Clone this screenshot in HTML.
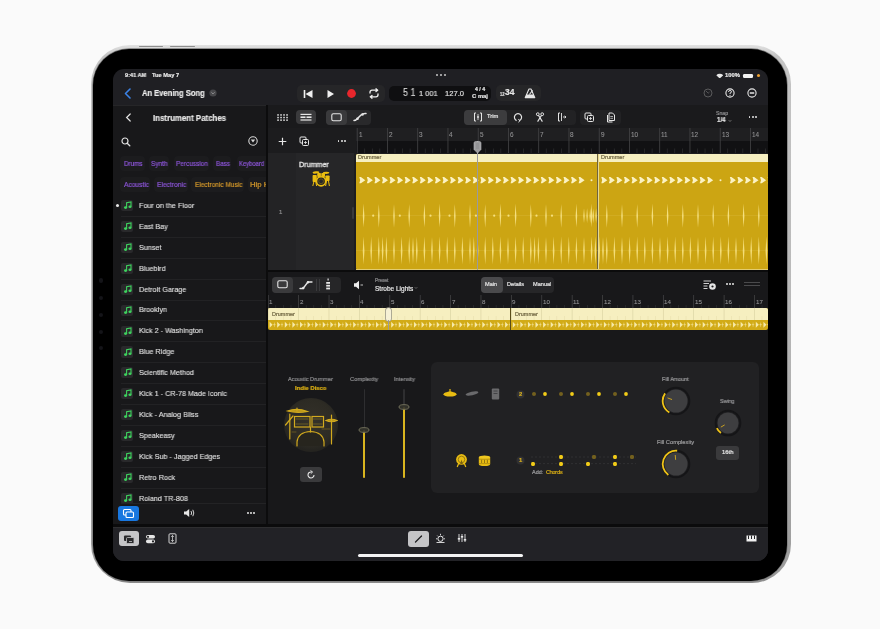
<!DOCTYPE html>
<html><head><meta charset="utf-8">
<style>
html,body{margin:0;padding:0}
body{width:880px;height:629px;background:#fafafa;position:relative;overflow:hidden;font-family:"Liberation Sans",sans-serif}
.a{position:absolute;display:block}
.t{position:absolute;white-space:nowrap;line-height:1;font-family:"Liberation Sans",sans-serif;will-change:transform}
</style></head><body>
<div class="a" style="left:90.5px;top:45px;width:700px;height:538px;border-radius:39px;background:linear-gradient(#e2e2e2,#c4c4c4 2%,#b8b8b8 50%,#9c9c9c 98%,#8a8a8a)"></div>
<div class="a" style="left:93.4px;top:49px;width:694px;height:531.5px;border-radius:36px;background:#000;box-shadow:0 0 0 0.7px #7a7a7a"></div>
<div class="a" style="left:139.3px;top:45.6px;width:24px;height:1.3px;background:#8e8e8e;border-radius:1px;"></div>
<div class="a" style="left:170px;top:45.6px;width:25px;height:1.3px;background:#8e8e8e;border-radius:1px;"></div>
<div class="a" style="left:98.5px;top:278.3px;width:4.4px;height:4.4px;background:#141418;border-radius:3px;"></div>
<div class="a" style="left:98.5px;top:295.5px;width:4.4px;height:4.4px;background:#141418;border-radius:3px;"></div>
<div class="a" style="left:98.5px;top:312.8px;width:4.4px;height:4.4px;background:#141418;border-radius:3px;"></div>
<div class="a" style="left:98.5px;top:329.8px;width:4.4px;height:4.4px;background:#141418;border-radius:3px;"></div>
<div class="a" style="left:98.5px;top:345.8px;width:4.4px;height:4.4px;background:#141418;border-radius:3px;"></div>
<div class="a" id="screen" style="left:113px;top:69px;width:655px;height:492px;border-radius:11px;overflow:hidden;background:#1f1f23"><div class="a" style="left:-113px;top:-69px;width:880px;height:629px">
<div class="a" style="left:113px;top:105px;width:153px;height:419px;background:#18181a;"></div>
<div class="a" style="left:113px;top:104.5px;width:153px;height:1px;background:#262628;"></div>
<div class="a" style="left:266px;top:105px;width:2px;height:421px;background:#0c0c0d;"></div>
<div class="a" style="left:268px;top:105px;width:500px;height:23px;background:#1a1a1c;"></div>
<div class="a" style="left:268px;top:128px;width:88px;height:25px;background:#1c1c1e;"></div>
<div class="a" style="left:356px;top:128px;width:412px;height:13px;background:#1f1f21;"></div>
<div class="a" style="left:356px;top:141px;width:412px;height:12px;background:#111113;"></div>
<div class="a" style="left:268px;top:153px;width:28px;height:117px;background:#232325;"></div>
<div class="a" style="left:296px;top:153px;width:58px;height:117px;background:#262628;"></div>
<div class="a" style="left:354px;top:153px;width:414px;height:117px;background:#1d1d1f;"></div>
<div class="a" style="left:268px;top:270px;width:500px;height:2px;background:#0b0b0c;"></div>
<div class="a" style="left:268px;top:272px;width:500px;height:252px;background:#18181a;"></div>
<div class="a" style="left:113px;top:524px;width:655px;height:2.5px;background:#0b0b0c;"></div>
<div class="a" style="left:113px;top:526.5px;width:655px;height:35px;background:#222226;"></div>
<div class="a" style="left:113px;top:526.5px;width:655px;height:1px;background:#2e2e30;"></div>
<div class="a" style="left:358px;top:553.5px;width:164.5px;height:3px;background:#f4f4f4;border-radius:2px;"></div>
<div class="t" style="left:125.4px;top:72.57px;font-size:5.7px;color:#e8e8e8;font-weight:bold;transform:scaleX(0.98);transform-origin:0 0;-webkit-text-stroke:0.2px #e8e8e8;">9:41 AM</div>
<div class="t" style="left:152px;top:72.57px;font-size:5.7px;color:#e8e8e8;font-weight:bold;-webkit-text-stroke:0.2px #e8e8e8;">Tue May 7</div>
<div class="a" style="left:435.5px;top:74.3px;width:2.2px;height:2.2px;background:#c8c8c8;border-radius:1.1px;"></div>
<div class="a" style="left:439.7px;top:74.3px;width:2.2px;height:2.2px;background:#c8c8c8;border-radius:1.1px;"></div>
<div class="a" style="left:443.9px;top:74.3px;width:2.2px;height:2.2px;background:#c8c8c8;border-radius:1.1px;"></div>
<svg class="a" style="left:715.5px;top:72.6px" width="7.5" height="5.5" viewBox="0 0 7.5 5.5"><path d="M0.3 2.2 A5 5 0 0 1 7.2 2.2 L3.75 5.5 Z" fill="#e8e8e8"/></svg>
<div class="t" style="left:725px;top:72.59px;font-size:5.8px;color:#e8e8e8;font-weight:bold;-webkit-text-stroke:0.2px #e8e8e8;">100%</div>
<div class="a" style="left:742.8px;top:74.3px;width:10.4px;height:3.6px;background:#f2f2f2;border-radius:1.2px;"></div>
<div class="a" style="left:756.6px;top:74.4px;width:3px;height:3px;background:#f0a030;border-radius:2px;"></div>
<svg class="a" style="left:123px;top:87.5px" width="9" height="11" viewBox="0 0 9 11"><path d="M7 1 L2.5 5.5 L7 10" stroke="#3b82e6" stroke-width="1.6" fill="none" stroke-linecap="round" stroke-linejoin="round"/></svg>
<div class="t" style="left:142.1px;top:89.22px;font-size:8.6px;color:#ececec;font-weight:bold;transform:scaleX(0.88);transform-origin:0 0;-webkit-text-stroke:0.2px #ececec;">An Evening Song</div>
<svg class="a" style="left:209px;top:89px" width="8" height="8" viewBox="0 0 8 8"><circle cx="4" cy="4" r="3.6" fill="#48484b"/><path d="M2.4 3.3 L4 4.9 L5.6 3.3" stroke="#9a9a9c" stroke-width="0.9" fill="none"/></svg>
<div class="a" style="left:297px;top:85px;width:88px;height:17px;background:#262628;border-radius:5px;"></div>
<svg class="a" style="left:302px;top:88.5px" width="12" height="10" viewBox="0 0 12 10"><rect x="1.7" y="1" width="1.6" height="8" fill="#f0f0f0"/><path d="M10.5 1 L3.5 5 L10.5 9 Z" fill="#f0f0f0"/></svg>
<svg class="a" style="left:325px;top:88.5px" width="10" height="10" viewBox="0 0 10 10"><path d="M2.5 1 L9 5 L2.5 9 Z" fill="#f0f0f0"/></svg>
<svg class="a" style="left:345.5px;top:88px" width="11" height="11" viewBox="0 0 11 11"><circle cx="5.5" cy="5.5" r="4.4" fill="#e8262c"/></svg>
<svg class="a" style="left:367.5px;top:88px" width="12" height="11" viewBox="0 0 12 11"><path d="M2 5 V4.2 A2 2 0 0 1 4 2.2 H9.5 M8 0.8 L9.7 2.2 L8 3.6 M10 6 V6.8 A2 2 0 0 1 8 8.8 H2.5 M4 7.4 L2.3 8.8 L4 10.2" stroke="#eeeeee" stroke-width="1.3" fill="none" stroke-linecap="round" stroke-linejoin="round"/></svg>
<div class="a" style="left:389px;top:85.5px;width:102px;height:15.5px;background:#0f0f11;border-radius:5px;"></div>
<div class="t" style="left:402.5px;top:88.2px;font-size:10.4px;color:#dcdcdc;transform:scaleX(0.86);transform-origin:0 0;-webkit-text-stroke:0.1px #dcdcdc;">5 1</div>
<div class="t" style="left:419px;top:90.47px;font-size:7.6px;color:#dcdcdc;transform:scaleX(0.98);transform-origin:0 0;-webkit-text-stroke:0.2px #dcdcdc;">1 001</div>
<div class="t" style="left:444.8px;top:90.47px;font-size:7.6px;color:#dcdcdc;-webkit-text-stroke:0.2px #dcdcdc;">127.0</div>
<div class="t" style="left:474.6px;top:88.14px;font-size:4.8px;color:#e0e0e0;font-weight:bold;transform:scaleX(1.07);transform-origin:0 0;-webkit-text-stroke:0.2px #e0e0e0;">4 / 4</div>
<div class="t" style="left:471.6px;top:94.43px;font-size:5.4px;color:#e0e0e0;font-weight:bold;transform:scaleX(1.09);transform-origin:0 0;-webkit-text-stroke:0.2px #e0e0e0;">C maj</div>
<div class="a" style="left:496px;top:85px;width:45px;height:16px;background:#262628;border-radius:5px;"></div>
<div class="t" style="left:500.2px;top:90.55px;font-size:6.2px;color:#e6e6e6;font-weight:bold;transform:scaleX(0.65);transform-origin:0 0;-webkit-text-stroke:0.2px #e6e6e6;">12</div>
<div class="t" style="left:504.8px;top:88.96px;font-size:8.2px;color:#e6e6e6;font-weight:bold;transform:scaleX(1.03);transform-origin:0 0;-webkit-text-stroke:0.2px #e6e6e6;">34</div>
<svg class="a" style="left:523.5px;top:88px" width="12" height="11" viewBox="0 0 12 11"><path d="M5 1 H7 L10.8 9.6 H1.2 Z" stroke="#e6e6e6" stroke-width="1.1" fill="none" stroke-linejoin="round"/><path d="M2.4 6.6 H9.6 L10.6 9.4 H1.4 Z" fill="#e6e6e6"/><path d="M5.4 6.5 L8.6 2.4" stroke="#e6e6e6" stroke-width="1.1"/></svg>
<svg class="a" style="left:703px;top:88px" width="10" height="10" viewBox="0 0 10 10"><circle cx="5" cy="5" r="4" stroke="#5a5a5c" stroke-width="1" fill="none"/><path d="M3 3 L5.2 5.2 L6.5 4" stroke="#5a5a5c" stroke-width="0.9" fill="none"/></svg>
<svg class="a" style="left:725px;top:88px" width="10" height="10" viewBox="0 0 10 10"><circle cx="5" cy="5" r="4.1" stroke="#e6e6e6" stroke-width="1.1" fill="none"/><path d="M3.5 3.9 Q3.5 2.5 5 2.5 Q6.5 2.5 6.5 3.8 Q6.5 4.7 5 5.2 V6" stroke="#e6e6e6" stroke-width="1" fill="none"/><circle cx="5" cy="7.3" r="0.6" fill="#e6e6e6"/></svg>
<svg class="a" style="left:746.6px;top:88px" width="10" height="10" viewBox="0 0 10 10"><circle cx="5" cy="5" r="4.1" stroke="#e6e6e6" stroke-width="1.1" fill="none"/><path d="M2.8 5 H7.2" stroke="#e6e6e6" stroke-width="1.4"/></svg>
<svg class="a" style="left:125px;top:112.5px" width="7" height="10" viewBox="0 0 7 10"><path d="M5.2 1 L1.6 4.5 L5.2 8" stroke="#dedede" stroke-width="1.2" fill="none" stroke-linecap="round"/></svg>
<div class="t" style="left:152.6px;top:114.19px;font-size:8.4px;color:#e6e6e6;font-weight:bold;transform:scaleX(0.94);transform-origin:0 0;-webkit-text-stroke:0.2px #e6e6e6;">Instrument Patches</div>
<svg class="a" style="left:121px;top:136.5px" width="10" height="10" viewBox="0 0 10 10"><circle cx="4" cy="4" r="3" stroke="#e0e0e0" stroke-width="1.2" fill="none"/><path d="M6.2 6.2 L8.8 8.8" stroke="#e0e0e0" stroke-width="1.3" stroke-linecap="round"/></svg>
<svg class="a" style="left:248px;top:136.3px" width="10" height="10" viewBox="0 0 10 10"><circle cx="5" cy="5" r="4.2" stroke="#d8d8d8" stroke-width="1.1" fill="none"/><path d="M2.8 3.6 H7.2 L5 6.6 Z" fill="#d8d8d8"/></svg>
<div class="a" style="left:113px;top:150px;width:153px;height:45px;overflow:hidden"><div class="a" style="left:-113px;top:-150px;width:880px;height:629px">
<div class="a" style="left:120.3px;top:156px;width:24.5px;height:15px;background:#1c1c1e;border-radius:4px;"></div>
<div class="t" style="left:123.5px;top:160.37px;font-size:7px;color:#8c55d8;transform:scaleX(0.9);transform-origin:0 0;-webkit-text-stroke:0.2px #8c55d8;">Drums</div>
<div class="a" style="left:148.5px;top:156px;width:20.9px;height:15px;background:#1c1c1e;border-radius:4px;"></div>
<div class="t" style="left:151px;top:160.37px;font-size:7px;color:#8c55d8;transform:scaleX(0.92);transform-origin:0 0;-webkit-text-stroke:0.2px #8c55d8;">Synth</div>
<div class="a" style="left:174px;top:156px;width:35.4px;height:15px;background:#1c1c1e;border-radius:4px;"></div>
<div class="t" style="left:176.3px;top:160.37px;font-size:7px;color:#8c55d8;transform:scaleX(0.92);transform-origin:0 0;-webkit-text-stroke:0.2px #8c55d8;">Percussion</div>
<div class="a" style="left:213px;top:156px;width:18px;height:15px;background:#1c1c1e;border-radius:4px;"></div>
<div class="t" style="left:215.7px;top:160.37px;font-size:7px;color:#8c55d8;transform:scaleX(0.9);transform-origin:0 0;-webkit-text-stroke:0.2px #8c55d8;">Bass</div>
<div class="a" style="left:236.6px;top:156px;width:38.4px;height:15px;background:#1c1c1e;border-radius:4px;"></div>
<div class="t" style="left:238.8px;top:160.37px;font-size:7px;color:#8c55d8;transform:scaleX(0.84);transform-origin:0 0;-webkit-text-stroke:0.2px #8c55d8;">Keyboard</div>
<div class="a" style="left:120.3px;top:176.5px;width:30px;height:15px;background:#1c1c1e;border-radius:4px;"></div>
<div class="t" style="left:123.5px;top:181.37px;font-size:7px;color:#8c55d8;transform:scaleX(0.94);transform-origin:0 0;-webkit-text-stroke:0.2px #8c55d8;">Acoustic</div>
<div class="a" style="left:154px;top:176.5px;width:33.5px;height:15px;background:#1c1c1e;border-radius:4px;"></div>
<div class="t" style="left:156.6px;top:181.37px;font-size:7px;color:#8c55d8;transform:scaleX(0.95);transform-origin:0 0;-webkit-text-stroke:0.2px #8c55d8;">Electronic</div>
<div class="a" style="left:191px;top:176.5px;width:53px;height:15px;background:#1c1c1e;border-radius:4px;"></div>
<div class="t" style="left:194.5px;top:181.37px;font-size:7px;color:#d4982a;transform:scaleX(0.93);transform-origin:0 0;-webkit-text-stroke:0.2px #d4982a;">Electronic Music</div>
<div class="a" style="left:247.5px;top:176.5px;width:42.5px;height:15px;background:#1c1c1e;border-radius:4px;"></div>
<div class="t" style="left:250px;top:181.37px;font-size:7px;color:#d4982a;transform:scaleX(1.11);transform-origin:0 0;-webkit-text-stroke:0.2px #d4982a;">Hip Hop</div>
</div></div>
<div class="a" style="left:121.2px;top:200.1px;width:12.3px;height:11.2px;background:#29292b;border-radius:2px;"></div>
<svg class="a" style="left:122.5px;top:201.2px" width="10" height="9" viewBox="0 0 10 9"><path d="M3.6 6.4 V1.8 L8 0.9 V5.5" stroke="#3ed25e" stroke-width="1.1" fill="none"/><ellipse cx="2.6" cy="6.6" rx="1.6" ry="1.3" fill="#3ed25e"/><ellipse cx="7" cy="5.8" rx="1.6" ry="1.3" fill="#3ed25e"/></svg>
<div class="t" style="left:139px;top:201.97px;font-size:7.6px;color:#e2e2e2;transform:scaleX(0.95);transform-origin:0 0;-webkit-text-stroke:0.12px #e2e2e2;">Four on the Floor</div>
<div class="a" style="left:121px;top:215.9px;width:145px;height:0.7px;background:#222224;"></div>
<div class="a" style="left:121.2px;top:221px;width:12.3px;height:11.2px;background:#29292b;border-radius:2px;"></div>
<svg class="a" style="left:122.5px;top:222.1px" width="10" height="9" viewBox="0 0 10 9"><path d="M3.6 6.4 V1.8 L8 0.9 V5.5" stroke="#3ed25e" stroke-width="1.1" fill="none"/><ellipse cx="2.6" cy="6.6" rx="1.6" ry="1.3" fill="#3ed25e"/><ellipse cx="7" cy="5.8" rx="1.6" ry="1.3" fill="#3ed25e"/></svg>
<div class="t" style="left:139px;top:222.87px;font-size:7.6px;color:#e2e2e2;transform:scaleX(0.95);transform-origin:0 0;-webkit-text-stroke:0.12px #e2e2e2;">East Bay</div>
<div class="a" style="left:121px;top:236.8px;width:145px;height:0.7px;background:#222224;"></div>
<div class="a" style="left:121.2px;top:241.9px;width:12.3px;height:11.2px;background:#29292b;border-radius:2px;"></div>
<svg class="a" style="left:122.5px;top:243px" width="10" height="9" viewBox="0 0 10 9"><path d="M3.6 6.4 V1.8 L8 0.9 V5.5" stroke="#3ed25e" stroke-width="1.1" fill="none"/><ellipse cx="2.6" cy="6.6" rx="1.6" ry="1.3" fill="#3ed25e"/><ellipse cx="7" cy="5.8" rx="1.6" ry="1.3" fill="#3ed25e"/></svg>
<div class="t" style="left:139px;top:243.77px;font-size:7.6px;color:#e2e2e2;transform:scaleX(0.95);transform-origin:0 0;-webkit-text-stroke:0.12px #e2e2e2;">Sunset</div>
<div class="a" style="left:121px;top:257.7px;width:145px;height:0.7px;background:#222224;"></div>
<div class="a" style="left:121.2px;top:262.8px;width:12.3px;height:11.2px;background:#29292b;border-radius:2px;"></div>
<svg class="a" style="left:122.5px;top:263.9px" width="10" height="9" viewBox="0 0 10 9"><path d="M3.6 6.4 V1.8 L8 0.9 V5.5" stroke="#3ed25e" stroke-width="1.1" fill="none"/><ellipse cx="2.6" cy="6.6" rx="1.6" ry="1.3" fill="#3ed25e"/><ellipse cx="7" cy="5.8" rx="1.6" ry="1.3" fill="#3ed25e"/></svg>
<div class="t" style="left:139px;top:264.67px;font-size:7.6px;color:#e2e2e2;transform:scaleX(0.95);transform-origin:0 0;-webkit-text-stroke:0.12px #e2e2e2;">Bluebird</div>
<div class="a" style="left:121px;top:278.6px;width:145px;height:0.7px;background:#222224;"></div>
<div class="a" style="left:121.2px;top:283.7px;width:12.3px;height:11.2px;background:#29292b;border-radius:2px;"></div>
<svg class="a" style="left:122.5px;top:284.8px" width="10" height="9" viewBox="0 0 10 9"><path d="M3.6 6.4 V1.8 L8 0.9 V5.5" stroke="#3ed25e" stroke-width="1.1" fill="none"/><ellipse cx="2.6" cy="6.6" rx="1.6" ry="1.3" fill="#3ed25e"/><ellipse cx="7" cy="5.8" rx="1.6" ry="1.3" fill="#3ed25e"/></svg>
<div class="t" style="left:139px;top:285.57px;font-size:7.6px;color:#e2e2e2;transform:scaleX(0.95);transform-origin:0 0;-webkit-text-stroke:0.12px #e2e2e2;">Detroit Garage</div>
<div class="a" style="left:121px;top:299.5px;width:145px;height:0.7px;background:#222224;"></div>
<div class="a" style="left:121.2px;top:304.6px;width:12.3px;height:11.2px;background:#29292b;border-radius:2px;"></div>
<svg class="a" style="left:122.5px;top:305.7px" width="10" height="9" viewBox="0 0 10 9"><path d="M3.6 6.4 V1.8 L8 0.9 V5.5" stroke="#3ed25e" stroke-width="1.1" fill="none"/><ellipse cx="2.6" cy="6.6" rx="1.6" ry="1.3" fill="#3ed25e"/><ellipse cx="7" cy="5.8" rx="1.6" ry="1.3" fill="#3ed25e"/></svg>
<div class="t" style="left:139px;top:306.47px;font-size:7.6px;color:#e2e2e2;transform:scaleX(0.95);transform-origin:0 0;-webkit-text-stroke:0.12px #e2e2e2;">Brooklyn</div>
<div class="a" style="left:121px;top:320.4px;width:145px;height:0.7px;background:#222224;"></div>
<div class="a" style="left:121.2px;top:325.5px;width:12.3px;height:11.2px;background:#29292b;border-radius:2px;"></div>
<svg class="a" style="left:122.5px;top:326.6px" width="10" height="9" viewBox="0 0 10 9"><path d="M3.6 6.4 V1.8 L8 0.9 V5.5" stroke="#3ed25e" stroke-width="1.1" fill="none"/><ellipse cx="2.6" cy="6.6" rx="1.6" ry="1.3" fill="#3ed25e"/><ellipse cx="7" cy="5.8" rx="1.6" ry="1.3" fill="#3ed25e"/></svg>
<div class="t" style="left:139px;top:327.37px;font-size:7.6px;color:#e2e2e2;transform:scaleX(0.95);transform-origin:0 0;-webkit-text-stroke:0.12px #e2e2e2;">Kick 2 - Washington</div>
<div class="a" style="left:121px;top:341.3px;width:145px;height:0.7px;background:#222224;"></div>
<div class="a" style="left:121.2px;top:346.4px;width:12.3px;height:11.2px;background:#29292b;border-radius:2px;"></div>
<svg class="a" style="left:122.5px;top:347.5px" width="10" height="9" viewBox="0 0 10 9"><path d="M3.6 6.4 V1.8 L8 0.9 V5.5" stroke="#3ed25e" stroke-width="1.1" fill="none"/><ellipse cx="2.6" cy="6.6" rx="1.6" ry="1.3" fill="#3ed25e"/><ellipse cx="7" cy="5.8" rx="1.6" ry="1.3" fill="#3ed25e"/></svg>
<div class="t" style="left:139px;top:348.27px;font-size:7.6px;color:#e2e2e2;transform:scaleX(0.95);transform-origin:0 0;-webkit-text-stroke:0.12px #e2e2e2;">Blue Ridge</div>
<div class="a" style="left:121px;top:362.2px;width:145px;height:0.7px;background:#222224;"></div>
<div class="a" style="left:121.2px;top:367.3px;width:12.3px;height:11.2px;background:#29292b;border-radius:2px;"></div>
<svg class="a" style="left:122.5px;top:368.4px" width="10" height="9" viewBox="0 0 10 9"><path d="M3.6 6.4 V1.8 L8 0.9 V5.5" stroke="#3ed25e" stroke-width="1.1" fill="none"/><ellipse cx="2.6" cy="6.6" rx="1.6" ry="1.3" fill="#3ed25e"/><ellipse cx="7" cy="5.8" rx="1.6" ry="1.3" fill="#3ed25e"/></svg>
<div class="t" style="left:139px;top:369.17px;font-size:7.6px;color:#e2e2e2;transform:scaleX(0.95);transform-origin:0 0;-webkit-text-stroke:0.12px #e2e2e2;">Scientific Method</div>
<div class="a" style="left:121px;top:383.1px;width:145px;height:0.7px;background:#222224;"></div>
<div class="a" style="left:121.2px;top:388.2px;width:12.3px;height:11.2px;background:#29292b;border-radius:2px;"></div>
<svg class="a" style="left:122.5px;top:389.3px" width="10" height="9" viewBox="0 0 10 9"><path d="M3.6 6.4 V1.8 L8 0.9 V5.5" stroke="#3ed25e" stroke-width="1.1" fill="none"/><ellipse cx="2.6" cy="6.6" rx="1.6" ry="1.3" fill="#3ed25e"/><ellipse cx="7" cy="5.8" rx="1.6" ry="1.3" fill="#3ed25e"/></svg>
<div class="t" style="left:139px;top:390.07px;font-size:7.6px;color:#e2e2e2;transform:scaleX(0.95);transform-origin:0 0;-webkit-text-stroke:0.12px #e2e2e2;">Kick 1 - CR-78 Made Iconic</div>
<div class="a" style="left:121px;top:404px;width:145px;height:0.7px;background:#222224;"></div>
<div class="a" style="left:121.2px;top:409.1px;width:12.3px;height:11.2px;background:#29292b;border-radius:2px;"></div>
<svg class="a" style="left:122.5px;top:410.2px" width="10" height="9" viewBox="0 0 10 9"><path d="M3.6 6.4 V1.8 L8 0.9 V5.5" stroke="#3ed25e" stroke-width="1.1" fill="none"/><ellipse cx="2.6" cy="6.6" rx="1.6" ry="1.3" fill="#3ed25e"/><ellipse cx="7" cy="5.8" rx="1.6" ry="1.3" fill="#3ed25e"/></svg>
<div class="t" style="left:139px;top:410.97px;font-size:7.6px;color:#e2e2e2;transform:scaleX(0.95);transform-origin:0 0;-webkit-text-stroke:0.12px #e2e2e2;">Kick - Analog Bliss</div>
<div class="a" style="left:121px;top:424.9px;width:145px;height:0.7px;background:#222224;"></div>
<div class="a" style="left:121.2px;top:430px;width:12.3px;height:11.2px;background:#29292b;border-radius:2px;"></div>
<svg class="a" style="left:122.5px;top:431.1px" width="10" height="9" viewBox="0 0 10 9"><path d="M3.6 6.4 V1.8 L8 0.9 V5.5" stroke="#3ed25e" stroke-width="1.1" fill="none"/><ellipse cx="2.6" cy="6.6" rx="1.6" ry="1.3" fill="#3ed25e"/><ellipse cx="7" cy="5.8" rx="1.6" ry="1.3" fill="#3ed25e"/></svg>
<div class="t" style="left:139px;top:431.87px;font-size:7.6px;color:#e2e2e2;transform:scaleX(0.95);transform-origin:0 0;-webkit-text-stroke:0.12px #e2e2e2;">Speakeasy</div>
<div class="a" style="left:121px;top:445.8px;width:145px;height:0.7px;background:#222224;"></div>
<div class="a" style="left:121.2px;top:450.9px;width:12.3px;height:11.2px;background:#29292b;border-radius:2px;"></div>
<svg class="a" style="left:122.5px;top:452px" width="10" height="9" viewBox="0 0 10 9"><path d="M3.6 6.4 V1.8 L8 0.9 V5.5" stroke="#3ed25e" stroke-width="1.1" fill="none"/><ellipse cx="2.6" cy="6.6" rx="1.6" ry="1.3" fill="#3ed25e"/><ellipse cx="7" cy="5.8" rx="1.6" ry="1.3" fill="#3ed25e"/></svg>
<div class="t" style="left:139px;top:452.77px;font-size:7.6px;color:#e2e2e2;transform:scaleX(0.95);transform-origin:0 0;-webkit-text-stroke:0.12px #e2e2e2;">Kick Sub - Jagged Edges</div>
<div class="a" style="left:121px;top:466.7px;width:145px;height:0.7px;background:#222224;"></div>
<div class="a" style="left:121.2px;top:471.8px;width:12.3px;height:11.2px;background:#29292b;border-radius:2px;"></div>
<svg class="a" style="left:122.5px;top:472.9px" width="10" height="9" viewBox="0 0 10 9"><path d="M3.6 6.4 V1.8 L8 0.9 V5.5" stroke="#3ed25e" stroke-width="1.1" fill="none"/><ellipse cx="2.6" cy="6.6" rx="1.6" ry="1.3" fill="#3ed25e"/><ellipse cx="7" cy="5.8" rx="1.6" ry="1.3" fill="#3ed25e"/></svg>
<div class="t" style="left:139px;top:473.67px;font-size:7.6px;color:#e2e2e2;transform:scaleX(0.95);transform-origin:0 0;-webkit-text-stroke:0.12px #e2e2e2;">Retro Rock</div>
<div class="a" style="left:121px;top:487.6px;width:145px;height:0.7px;background:#222224;"></div>
<div class="a" style="left:121.2px;top:492.7px;width:12.3px;height:11.2px;background:#29292b;border-radius:2px;"></div>
<svg class="a" style="left:122.5px;top:493.8px" width="10" height="9" viewBox="0 0 10 9"><path d="M3.6 6.4 V1.8 L8 0.9 V5.5" stroke="#3ed25e" stroke-width="1.1" fill="none"/><ellipse cx="2.6" cy="6.6" rx="1.6" ry="1.3" fill="#3ed25e"/><ellipse cx="7" cy="5.8" rx="1.6" ry="1.3" fill="#3ed25e"/></svg>
<div class="t" style="left:139px;top:494.57px;font-size:7.6px;color:#e2e2e2;transform:scaleX(0.95);transform-origin:0 0;-webkit-text-stroke:0.12px #e2e2e2;">Roland TR-808</div>
<div class="a" style="left:116px;top:204.2px;width:3px;height:3px;background:#e8e8e8;border-radius:2px;"></div>
<div class="a" style="left:113px;top:503px;width:153px;height:21px;background:#18181a;"></div>
<div class="a" style="left:121px;top:502.6px;width:145px;height:0.7px;background:#232325;"></div>
<div class="a" style="left:118px;top:505.5px;width:21.4px;height:15px;background:#1877e0;border-radius:3px;"></div>
<svg class="a" style="left:122px;top:507.5px" width="14" height="11" viewBox="0 0 14 11"><rect x="1.5" y="1.5" width="7.5" height="5.5" rx="1" stroke="#fff" stroke-width="1.1" fill="#1877e0"/><rect x="4" y="4" width="7.5" height="5.5" rx="1" stroke="#fff" stroke-width="1.1" fill="#1877e0"/></svg>
<svg class="a" style="left:183px;top:508px" width="13" height="10" viewBox="0 0 13 10"><path d="M1 3.5 H3.2 L6.2 1 V9 L3.2 6.5 H1 Z" fill="#e6e6e6"/><path d="M8 3 Q9.3 5 8 7 M9.8 1.8 Q11.8 5 9.8 8.2" stroke="#e6e6e6" stroke-width="0.9" fill="none"/></svg>
<div class="a" style="left:247px;top:512px;width:1.8px;height:1.8px;background:#e6e6e6;border-radius:1px;"></div>
<div class="a" style="left:250.2px;top:512px;width:1.8px;height:1.8px;background:#e6e6e6;border-radius:1px;"></div>
<div class="a" style="left:253.4px;top:512px;width:1.8px;height:1.8px;background:#e6e6e6;border-radius:1px;"></div>
<svg class="a" style="left:277.3px;top:113.8px" width="12" height="8" viewBox="0 0 12 8"><rect x="0.2" y="0.2" width="1.7" height="1.5" fill="#d0d0d0"/><rect x="3.2" y="0.2" width="1.7" height="1.5" fill="#d0d0d0"/><rect x="6.2" y="0.2" width="1.7" height="1.5" fill="#d0d0d0"/><rect x="9.2" y="0.2" width="1.7" height="1.5" fill="#d0d0d0"/><rect x="0.2" y="2.8000000000000003" width="1.7" height="1.5" fill="#d0d0d0"/><rect x="3.2" y="2.8000000000000003" width="1.7" height="1.5" fill="#d0d0d0"/><rect x="6.2" y="2.8000000000000003" width="1.7" height="1.5" fill="#d0d0d0"/><rect x="9.2" y="2.8000000000000003" width="1.7" height="1.5" fill="#d0d0d0"/><rect x="0.2" y="5.4" width="1.7" height="1.5" fill="#d0d0d0"/><rect x="3.2" y="5.4" width="1.7" height="1.5" fill="#d0d0d0"/><rect x="6.2" y="5.4" width="1.7" height="1.5" fill="#d0d0d0"/><rect x="9.2" y="5.4" width="1.7" height="1.5" fill="#d0d0d0"/></svg>
<div class="a" style="left:296px;top:109.5px;width:20px;height:14.5px;background:#3a3a3c;border-radius:4px;"></div>
<svg class="a" style="left:300px;top:112.5px" width="12" height="9" viewBox="0 0 12 9"><rect x="0.5" y="0.8" width="11" height="1.2" fill="#e6e6e6"/><rect x="0.5" y="3.4" width="5" height="1.6" fill="#e6e6e6"/><rect x="6.5" y="3.4" width="5" height="1.6" fill="#e6e6e6"/><rect x="0.5" y="6.4" width="11" height="1.2" fill="#e6e6e6"/></svg>
<div class="a" style="left:326px;top:109.5px;width:44.5px;height:15px;background:#29292b;border-radius:4px;"></div>
<div class="a" style="left:326px;top:109.5px;width:21px;height:15px;background:#3a3a3c;border-radius:4px;"></div>
<svg class="a" style="left:331px;top:112.5px" width="11" height="9" viewBox="0 0 11 9"><rect x="0.8" y="0.8" width="9.4" height="7" rx="1.5" stroke="#e6e6e6" stroke-width="1.1" fill="none"/></svg>
<svg class="a" style="left:352.5px;top:112px" width="14" height="10" viewBox="0 0 14 10"><path d="M1 8.5 Q3 8.5 5 6 L8 3 Q10 1.2 13 1.5" stroke="#e6e6e6" stroke-width="1.5" fill="none" stroke-linecap="round"/><circle cx="4.5" cy="6.8" r="1.3" fill="#e6e6e6"/><circle cx="9.5" cy="2.5" r="1.3" fill="#e6e6e6"/></svg>
<div class="a" style="left:463.6px;top:110px;width:112px;height:14.5px;background:#222224;border-radius:4px;"></div>
<div class="a" style="left:463.6px;top:110px;width:43.5px;height:14.5px;background:#3c3c3e;border-radius:4px;"></div>
<svg class="a" style="left:472.5px;top:112px" width="10" height="10" viewBox="0 0 10 10"><path d="M3 1 H1.5 V9 H3 M7 1 H8.5 V9 H7" stroke="#e6e6e6" stroke-width="1" fill="none"/><path d="M5 2 V8" stroke="#e6e6e6" stroke-width="0.8"/><circle cx="5" cy="5" r="0.9" fill="#e6e6e6"/></svg>
<div class="t" style="left:486.7px;top:114.39px;font-size:5.8px;color:#e6e6e6;-webkit-text-stroke:0.2px #e6e6e6;">Trim</div>
<svg class="a" style="left:513px;top:112px" width="10" height="11" viewBox="0 0 10 11"><path d="M6.4 8.6 A3.6 3.6 0 1 0 3.6 8.6" stroke="#e6e6e6" stroke-width="1.2" fill="none"/><path d="M5.3 7.3 L7 8.7 L5.4 10.2" stroke="#e6e6e6" stroke-width="1" fill="none"/></svg>
<svg class="a" style="left:534.5px;top:112px" width="10" height="11" viewBox="0 0 10 11"><circle cx="2.8" cy="2.2" r="1.4" stroke="#e6e6e6" stroke-width="1" fill="none"/><circle cx="7.2" cy="2.2" r="1.4" stroke="#e6e6e6" stroke-width="1" fill="none"/><path d="M3.5 3.4 L7.4 9.6 M6.5 3.4 L2.6 9.6" stroke="#e6e6e6" stroke-width="1.1"/></svg>
<svg class="a" style="left:555.5px;top:112px" width="11" height="10" viewBox="0 0 11 10"><path d="M4 1 H2.5 V9 H4" stroke="#e6e6e6" stroke-width="1" fill="none"/><path d="M5.5 1 V9" stroke="#e6e6e6" stroke-width="0.9"/><path d="M7 5 H10 M8.7 3.8 L10 5 L8.7 6.2" stroke="#e6e6e6" stroke-width="0.9" fill="none"/></svg>
<div class="a" style="left:579.7px;top:110px;width:41px;height:14.5px;background:#222224;border-radius:4px;"></div>
<svg class="a" style="left:584px;top:112px" width="11" height="11" viewBox="0 0 11 11"><rect x="1" y="1" width="6" height="6" rx="1" stroke="#e6e6e6" stroke-width="1" fill="none"/><rect x="3.5" y="3.5" width="6" height="6" rx="1" stroke="#e6e6e6" stroke-width="1" fill="#262628"/><path d="M6.5 5 V8 M5 6.5 H8" stroke="#e6e6e6" stroke-width="0.8"/></svg>
<svg class="a" style="left:605.5px;top:111.5px" width="11" height="11" viewBox="0 0 11 11"><path d="M3 1 H6.5 L8.5 3 V8.5 H3 Z" stroke="#e6e6e6" stroke-width="1" fill="none"/><path d="M1.5 3 V10 H6.5" stroke="#e6e6e6" stroke-width="1" fill="none"/><path d="M4.3 4.5 H7 M4.3 6.3 H7" stroke="#e6e6e6" stroke-width="0.7"/></svg>
<div class="t" style="left:716.4px;top:110.6px;font-size:5.2px;color:#8c8c8e;-webkit-text-stroke:0.2px #8c8c8e;">Snap</div>
<div class="t" style="left:716.8px;top:116.81px;font-size:6.6px;color:#e6e6e6;font-weight:bold;transform:scaleX(0.92);transform-origin:0 0;-webkit-text-stroke:0.2px #e6e6e6;">1/4</div>
<svg class="a" style="left:727.5px;top:118.5px" width="4" height="4" viewBox="0 0 4 4"><path d="M0.6 1 L2 2.6 L3.4 1" stroke="#777" stroke-width="0.8" fill="none"/></svg>
<div class="a" style="left:748.6px;top:116.3px;width:1.9px;height:1.9px;background:#e6e6e6;border-radius:1px;"></div>
<div class="a" style="left:751.9px;top:116.3px;width:1.9px;height:1.9px;background:#e6e6e6;border-radius:1px;"></div>
<div class="a" style="left:755.2px;top:116.3px;width:1.9px;height:1.9px;background:#e6e6e6;border-radius:1px;"></div>
<svg class="a" style="left:278px;top:137px" width="9" height="9" viewBox="0 0 9 9"><path d="M4.5 0.7 V8.3 M0.7 4.5 H8.3" stroke="#e6e6e6" stroke-width="1.2"/></svg>
<svg class="a" style="left:299px;top:136px" width="11" height="11" viewBox="0 0 11 11"><rect x="1" y="1" width="6" height="6" rx="1" stroke="#e6e6e6" stroke-width="1" fill="none"/><rect x="3.5" y="3.5" width="6" height="6" rx="1" stroke="#e6e6e6" stroke-width="1" fill="#1e1e20"/><path d="M6.5 5 V8 M5 6.5 H8" stroke="#e6e6e6" stroke-width="0.8"/></svg>
<div class="a" style="left:337.5px;top:140.3px;width:1.9px;height:1.9px;background:#e6e6e6;border-radius:1px;"></div>
<div class="a" style="left:340.8px;top:140.3px;width:1.9px;height:1.9px;background:#e6e6e6;border-radius:1px;"></div>
<div class="a" style="left:344.1px;top:140.3px;width:1.9px;height:1.9px;background:#e6e6e6;border-radius:1px;"></div>
<svg class="a" style="left:356px;top:128px" width="412" height="25" viewBox="0 0 412 25"><rect x="0.80" y="0" width="0.8" height="25" fill="#444446"/><rect x="8.36" y="20.5" width="0.7" height="4.5" fill="#303032"/><rect x="15.93" y="20.5" width="0.7" height="4.5" fill="#303032"/><rect x="23.49" y="20.5" width="0.7" height="4.5" fill="#303032"/><rect x="31.05" y="0" width="0.8" height="25" fill="#444446"/><rect x="38.61" y="20.5" width="0.7" height="4.5" fill="#303032"/><rect x="46.18" y="20.5" width="0.7" height="4.5" fill="#303032"/><rect x="53.74" y="20.5" width="0.7" height="4.5" fill="#303032"/><rect x="61.30" y="0" width="0.8" height="25" fill="#444446"/><rect x="68.86" y="20.5" width="0.7" height="4.5" fill="#303032"/><rect x="76.43" y="20.5" width="0.7" height="4.5" fill="#303032"/><rect x="83.99" y="20.5" width="0.7" height="4.5" fill="#303032"/><rect x="91.55" y="0" width="0.8" height="25" fill="#444446"/><rect x="99.11" y="20.5" width="0.7" height="4.5" fill="#303032"/><rect x="106.68" y="20.5" width="0.7" height="4.5" fill="#303032"/><rect x="114.24" y="20.5" width="0.7" height="4.5" fill="#303032"/><rect x="121.80" y="0" width="0.8" height="25" fill="#444446"/><rect x="129.36" y="20.5" width="0.7" height="4.5" fill="#303032"/><rect x="136.93" y="20.5" width="0.7" height="4.5" fill="#303032"/><rect x="144.49" y="20.5" width="0.7" height="4.5" fill="#303032"/><rect x="152.05" y="0" width="0.8" height="25" fill="#444446"/><rect x="159.61" y="20.5" width="0.7" height="4.5" fill="#303032"/><rect x="167.17" y="20.5" width="0.7" height="4.5" fill="#303032"/><rect x="174.74" y="20.5" width="0.7" height="4.5" fill="#303032"/><rect x="182.30" y="0" width="0.8" height="25" fill="#444446"/><rect x="189.86" y="20.5" width="0.7" height="4.5" fill="#303032"/><rect x="197.42" y="20.5" width="0.7" height="4.5" fill="#303032"/><rect x="204.99" y="20.5" width="0.7" height="4.5" fill="#303032"/><rect x="212.55" y="0" width="0.8" height="25" fill="#444446"/><rect x="220.11" y="20.5" width="0.7" height="4.5" fill="#303032"/><rect x="227.67" y="20.5" width="0.7" height="4.5" fill="#303032"/><rect x="235.24" y="20.5" width="0.7" height="4.5" fill="#303032"/><rect x="242.80" y="0" width="0.8" height="25" fill="#444446"/><rect x="250.36" y="20.5" width="0.7" height="4.5" fill="#303032"/><rect x="257.92" y="20.5" width="0.7" height="4.5" fill="#303032"/><rect x="265.49" y="20.5" width="0.7" height="4.5" fill="#303032"/><rect x="273.05" y="0" width="0.8" height="25" fill="#444446"/><rect x="280.61" y="20.5" width="0.7" height="4.5" fill="#303032"/><rect x="288.17" y="20.5" width="0.7" height="4.5" fill="#303032"/><rect x="295.74" y="20.5" width="0.7" height="4.5" fill="#303032"/><rect x="303.30" y="0" width="0.8" height="25" fill="#444446"/><rect x="310.86" y="20.5" width="0.7" height="4.5" fill="#303032"/><rect x="318.42" y="20.5" width="0.7" height="4.5" fill="#303032"/><rect x="325.99" y="20.5" width="0.7" height="4.5" fill="#303032"/><rect x="333.55" y="0" width="0.8" height="25" fill="#444446"/><rect x="341.11" y="20.5" width="0.7" height="4.5" fill="#303032"/><rect x="348.67" y="20.5" width="0.7" height="4.5" fill="#303032"/><rect x="356.24" y="20.5" width="0.7" height="4.5" fill="#303032"/><rect x="363.80" y="0" width="0.8" height="25" fill="#444446"/><rect x="371.36" y="20.5" width="0.7" height="4.5" fill="#303032"/><rect x="378.92" y="20.5" width="0.7" height="4.5" fill="#303032"/><rect x="386.49" y="20.5" width="0.7" height="4.5" fill="#303032"/><rect x="394.05" y="0" width="0.8" height="25" fill="#444446"/><rect x="401.61" y="20.5" width="0.7" height="4.5" fill="#303032"/><rect x="409.17" y="20.5" width="0.7" height="4.5" fill="#303032"/><rect x="416.74" y="20.5" width="0.7" height="4.5" fill="#303032"/></svg>
<div class="t" style="left:358.6px;top:132.08px;font-size:6.4px;color:#909092;-webkit-text-stroke:0.1px #909092;">1</div>
<div class="t" style="left:388.85px;top:132.08px;font-size:6.4px;color:#909092;-webkit-text-stroke:0.1px #909092;">2</div>
<div class="t" style="left:419.1px;top:132.08px;font-size:6.4px;color:#909092;-webkit-text-stroke:0.1px #909092;">3</div>
<div class="t" style="left:449.35px;top:132.08px;font-size:6.4px;color:#909092;-webkit-text-stroke:0.1px #909092;">4</div>
<div class="t" style="left:479.6px;top:132.08px;font-size:6.4px;color:#909092;-webkit-text-stroke:0.1px #909092;">5</div>
<div class="t" style="left:509.85px;top:132.08px;font-size:6.4px;color:#909092;-webkit-text-stroke:0.1px #909092;">6</div>
<div class="t" style="left:540.1px;top:132.08px;font-size:6.4px;color:#909092;-webkit-text-stroke:0.1px #909092;">7</div>
<div class="t" style="left:570.35px;top:132.08px;font-size:6.4px;color:#909092;-webkit-text-stroke:0.1px #909092;">8</div>
<div class="t" style="left:600.6px;top:132.08px;font-size:6.4px;color:#909092;-webkit-text-stroke:0.1px #909092;">9</div>
<div class="t" style="left:630.85px;top:132.08px;font-size:6.4px;color:#909092;-webkit-text-stroke:0.1px #909092;">10</div>
<div class="t" style="left:661.1px;top:132.08px;font-size:6.4px;color:#909092;-webkit-text-stroke:0.1px #909092;">11</div>
<div class="t" style="left:691.35px;top:132.08px;font-size:6.4px;color:#909092;-webkit-text-stroke:0.1px #909092;">12</div>
<div class="t" style="left:721.6px;top:132.08px;font-size:6.4px;color:#909092;-webkit-text-stroke:0.1px #909092;">13</div>
<div class="t" style="left:751.85px;top:132.08px;font-size:6.4px;color:#909092;-webkit-text-stroke:0.1px #909092;">14</div>
<div class="t" style="left:299.4px;top:161.24px;font-size:7.4px;color:#e6e6e6;transform:scaleX(0.97);transform-origin:0 0;-webkit-text-stroke:0.3px #e6e6e6;">Drummer</div>
<svg class="a" style="left:312.2px;top:170px" width="18" height="17" viewBox="0 0 18 17"><g fill="#eabd10">
<ellipse cx="4" cy="2.4" rx="3.4" ry="1.2" transform="rotate(-6 4 2.4)"/><ellipse cx="14.2" cy="2.8" rx="3.2" ry="1.1"/>
<rect x="5.2" y="3" width="3.7" height="4" rx="0.8"/><rect x="9.3" y="3" width="3.7" height="4" rx="0.8"/>
<rect x="0.6" y="5" width="4.2" height="7" rx="0.8"/><rect x="13.4" y="5.5" width="4.2" height="5.5" rx="0.8"/>
<path d="M1.8 12 L0.8 16 M3.8 12 L4.6 16 M14.5 11 L13.6 16 M16.5 11 L17.4 16" stroke="#eabd10" stroke-width="1"/>
</g><circle cx="9.1" cy="11.3" r="4.6" fill="#262628" stroke="#eabd10" stroke-width="1.6"/><circle cx="9.1" cy="11.3" r="2.4" fill="none" stroke="#8a7010" stroke-width="0.6"/></svg>
<div class="t" style="left:278.83px;top:209.12px;font-size:6px;color:#8e8e90;-webkit-text-stroke:0.2px #8e8e90;">1</div>
<div class="a" style="left:352.3px;top:207px;width:1.4px;height:12px;background:#3a3a3c;border-radius:1px;"></div>
<div class="a" style="left:355.5px;top:154px;width:413px;height:115.5px;background:#cca513;border-radius:2px;"></div>
<div class="a" style="left:355.5px;top:154px;width:413px;height:8px;background:#f6efc0;border-radius:2px;"></div>
<div class="a" style="left:355.5px;top:160px;width:413px;height:2px;background:#f6efc0;"></div>
<div class="a" style="left:597px;top:154px;width:0.9px;height:115.5px;background:#6e6440;"></div>
<div class="a" style="left:597.9px;top:154px;width:0.9px;height:115.5px;background:#e8d88e;"></div>
<div class="a" style="left:355.5px;top:268.7px;width:413px;height:0.8px;background:#e2cc70;"></div>
<div class="t" style="left:358.2px;top:155.06px;font-size:5.6px;color:#6e6440;-webkit-text-stroke:0.2px #6e6440;">Drummer</div>
<div class="t" style="left:601.2px;top:155.06px;font-size:5.6px;color:#6e6440;-webkit-text-stroke:0.2px #6e6440;">Drummer</div>
<svg class="a" style="left:355.5px;top:154px" width="413" height="115.5" viewBox="0 0 413 115.5"><path d="M3.30 23.10 L4.90 23.10 L9.30 26.20 L4.90 29.30 L3.30 29.30 L4.20 26.20 Z" fill="#fbf2c2"/><path d="M10.86 23.10 L12.46 23.10 L16.86 26.20 L12.46 29.30 L10.86 29.30 L11.76 26.20 Z" fill="#fbf2c2"/><path d="M18.43 23.10 L20.03 23.10 L24.43 26.20 L20.03 29.30 L18.43 29.30 L19.33 26.20 Z" fill="#fbf2c2"/><path d="M25.99 23.10 L27.59 23.10 L31.99 26.20 L27.59 29.30 L25.99 29.30 L26.89 26.20 Z" fill="#fbf2c2"/><path d="M33.55 23.10 L35.15 23.10 L39.55 26.20 L35.15 29.30 L33.55 29.30 L34.45 26.20 Z" fill="#fbf2c2"/><path d="M41.11 23.10 L42.71 23.10 L47.11 26.20 L42.71 29.30 L41.11 29.30 L42.01 26.20 Z" fill="#fbf2c2"/><path d="M48.68 23.10 L50.28 23.10 L54.68 26.20 L50.28 29.30 L48.68 29.30 L49.58 26.20 Z" fill="#fbf2c2"/><path d="M56.24 23.10 L57.84 23.10 L62.24 26.20 L57.84 29.30 L56.24 29.30 L57.14 26.20 Z" fill="#fbf2c2"/><path d="M63.80 23.10 L65.40 23.10 L69.80 26.20 L65.40 29.30 L63.80 29.30 L64.70 26.20 Z" fill="#fbf2c2"/><path d="M71.36 23.10 L72.96 23.10 L77.36 26.20 L72.96 29.30 L71.36 29.30 L72.26 26.20 Z" fill="#fbf2c2"/><path d="M78.93 23.10 L80.53 23.10 L84.93 26.20 L80.53 29.30 L78.93 29.30 L79.83 26.20 Z" fill="#fbf2c2"/><path d="M86.49 23.10 L88.09 23.10 L92.49 26.20 L88.09 29.30 L86.49 29.30 L87.39 26.20 Z" fill="#fbf2c2"/><path d="M94.05 23.10 L95.65 23.10 L100.05 26.20 L95.65 29.30 L94.05 29.30 L94.95 26.20 Z" fill="#fbf2c2"/><path d="M101.61 23.10 L103.21 23.10 L107.61 26.20 L103.21 29.30 L101.61 29.30 L102.51 26.20 Z" fill="#fbf2c2"/><path d="M109.18 23.10 L110.78 23.10 L115.18 26.20 L110.78 29.30 L109.18 29.30 L110.08 26.20 Z" fill="#fbf2c2"/><path d="M116.74 23.10 L118.34 23.10 L122.74 26.20 L118.34 29.30 L116.74 29.30 L117.64 26.20 Z" fill="#fbf2c2"/><path d="M124.30 23.10 L125.90 23.10 L130.30 26.20 L125.90 29.30 L124.30 29.30 L125.20 26.20 Z" fill="#fbf2c2"/><path d="M131.86 23.10 L133.46 23.10 L137.86 26.20 L133.46 29.30 L131.86 29.30 L132.76 26.20 Z" fill="#fbf2c2"/><path d="M139.43 23.10 L141.03 23.10 L145.43 26.20 L141.03 29.30 L139.43 29.30 L140.33 26.20 Z" fill="#fbf2c2"/><path d="M146.99 23.10 L148.59 23.10 L152.99 26.20 L148.59 29.30 L146.99 29.30 L147.89 26.20 Z" fill="#fbf2c2"/><path d="M154.55 23.10 L156.15 23.10 L160.55 26.20 L156.15 29.30 L154.55 29.30 L155.45 26.20 Z" fill="#fbf2c2"/><path d="M162.11 23.10 L163.71 23.10 L168.11 26.20 L163.71 29.30 L162.11 29.30 L163.01 26.20 Z" fill="#fbf2c2"/><path d="M169.67 23.10 L171.27 23.10 L175.67 26.20 L171.27 29.30 L169.67 29.30 L170.57 26.20 Z" fill="#fbf2c2"/><path d="M177.24 23.10 L178.84 23.10 L183.24 26.20 L178.84 29.30 L177.24 29.30 L178.14 26.20 Z" fill="#fbf2c2"/><path d="M184.80 23.10 L186.40 23.10 L190.80 26.20 L186.40 29.30 L184.80 29.30 L185.70 26.20 Z" fill="#fbf2c2"/><path d="M192.36 23.10 L193.96 23.10 L198.36 26.20 L193.96 29.30 L192.36 29.30 L193.26 26.20 Z" fill="#fbf2c2"/><path d="M199.92 23.10 L201.52 23.10 L205.92 26.20 L201.52 29.30 L199.92 29.30 L200.82 26.20 Z" fill="#fbf2c2"/><path d="M207.49 23.10 L209.09 23.10 L213.49 26.20 L209.09 29.30 L207.49 29.30 L208.39 26.20 Z" fill="#fbf2c2"/><path d="M215.05 23.10 L216.65 23.10 L221.05 26.20 L216.65 29.30 L215.05 29.30 L215.95 26.20 Z" fill="#fbf2c2"/><path d="M222.61 23.10 L224.21 23.10 L228.61 26.20 L224.21 29.30 L222.61 29.30 L223.51 26.20 Z" fill="#fbf2c2"/><path d="M245.30 23.10 L246.90 23.10 L251.30 26.20 L246.90 29.30 L245.30 29.30 L246.20 26.20 Z" fill="#fbf2c2"/><path d="M252.86 23.10 L254.46 23.10 L258.86 26.20 L254.46 29.30 L252.86 29.30 L253.76 26.20 Z" fill="#fbf2c2"/><path d="M260.42 23.10 L262.02 23.10 L266.42 26.20 L262.02 29.30 L260.42 29.30 L261.32 26.20 Z" fill="#fbf2c2"/><path d="M267.99 23.10 L269.59 23.10 L273.99 26.20 L269.59 29.30 L267.99 29.30 L268.89 26.20 Z" fill="#fbf2c2"/><path d="M275.55 23.10 L277.15 23.10 L281.55 26.20 L277.15 29.30 L275.55 29.30 L276.45 26.20 Z" fill="#fbf2c2"/><path d="M283.11 23.10 L284.71 23.10 L289.11 26.20 L284.71 29.30 L283.11 29.30 L284.01 26.20 Z" fill="#fbf2c2"/><path d="M290.67 23.10 L292.27 23.10 L296.67 26.20 L292.27 29.30 L290.67 29.30 L291.57 26.20 Z" fill="#fbf2c2"/><path d="M298.24 23.10 L299.84 23.10 L304.24 26.20 L299.84 29.30 L298.24 29.30 L299.14 26.20 Z" fill="#fbf2c2"/><path d="M305.80 23.10 L307.40 23.10 L311.80 26.20 L307.40 29.30 L305.80 29.30 L306.70 26.20 Z" fill="#fbf2c2"/><path d="M313.36 23.10 L314.96 23.10 L319.36 26.20 L314.96 29.30 L313.36 29.30 L314.26 26.20 Z" fill="#fbf2c2"/><path d="M320.92 23.10 L322.52 23.10 L326.92 26.20 L322.52 29.30 L320.92 29.30 L321.82 26.20 Z" fill="#fbf2c2"/><path d="M328.49 23.10 L330.09 23.10 L334.49 26.20 L330.09 29.30 L328.49 29.30 L329.39 26.20 Z" fill="#fbf2c2"/><path d="M336.05 23.10 L337.65 23.10 L342.05 26.20 L337.65 29.30 L336.05 29.30 L336.95 26.20 Z" fill="#fbf2c2"/><path d="M343.61 23.10 L345.21 23.10 L349.61 26.20 L345.21 29.30 L343.61 29.30 L344.51 26.20 Z" fill="#fbf2c2"/><path d="M351.17 23.10 L352.77 23.10 L357.17 26.20 L352.77 29.30 L351.17 29.30 L352.07 26.20 Z" fill="#fbf2c2"/><path d="M373.86 23.10 L375.46 23.10 L379.86 26.20 L375.46 29.30 L373.86 29.30 L374.76 26.20 Z" fill="#fbf2c2"/><path d="M381.42 23.10 L383.02 23.10 L387.42 26.20 L383.02 29.30 L381.42 29.30 L382.32 26.20 Z" fill="#fbf2c2"/><path d="M388.99 23.10 L390.59 23.10 L394.99 26.20 L390.59 29.30 L388.99 29.30 L389.89 26.20 Z" fill="#fbf2c2"/><path d="M396.55 23.10 L398.15 23.10 L402.55 26.20 L398.15 29.30 L396.55 29.30 L397.45 26.20 Z" fill="#fbf2c2"/><path d="M404.11 23.10 L405.71 23.10 L410.11 26.20 L405.71 29.30 L404.11 29.30 L405.01 26.20 Z" fill="#fbf2c2"/><path d="M411.67 23.10 L413.27 23.10 L417.67 26.20 L413.27 29.30 L411.67 29.30 L412.57 26.20 Z" fill="#fbf2c2"/><circle cx="235.5" cy="26.19999999999999" r="1" fill="#f8f0c4"/><circle cx="364.5" cy="26.19999999999999" r="1" fill="#f8f0c4"/><rect x="0" y="61.39999999999999" width="413" height="0.6" fill="#e8cf68" fill-opacity="0.3"/><rect x="0" y="96.10000000000001" width="413" height="0.6" fill="#e8cf68" fill-opacity="0.3"/><path d="M7.60 49.70 Q9.10 61.70 7.60 73.70 Q6.10 61.70 7.60 49.70 Z" fill="#fae68a" fill-opacity="0.9"/><path d="M22.80 49.70 Q24.30 61.70 22.80 73.70 Q21.30 61.70 22.80 49.70 Z" fill="#fae68a" fill-opacity="0.9"/><path d="M38.00 49.70 Q39.50 61.70 38.00 73.70 Q36.50 61.70 38.00 49.70 Z" fill="#fae68a" fill-opacity="0.9"/><path d="M53.20 49.70 Q54.70 61.70 53.20 73.70 Q51.70 61.70 53.20 49.70 Z" fill="#fae68a" fill-opacity="0.9"/><path d="M68.40 49.70 Q69.90 61.70 68.40 73.70 Q66.90 61.70 68.40 49.70 Z" fill="#fae68a" fill-opacity="0.9"/><path d="M83.60 49.70 Q85.10 61.70 83.60 73.70 Q82.10 61.70 83.60 49.70 Z" fill="#fae68a" fill-opacity="0.9"/><path d="M98.80 49.70 Q100.30 61.70 98.80 73.70 Q97.30 61.70 98.80 49.70 Z" fill="#fae68a" fill-opacity="0.9"/><path d="M114.00 49.70 Q115.50 61.70 114.00 73.70 Q112.50 61.70 114.00 49.70 Z" fill="#fae68a" fill-opacity="0.9"/><path d="M129.20 49.70 Q130.70 61.70 129.20 73.70 Q127.70 61.70 129.20 49.70 Z" fill="#fae68a" fill-opacity="0.9"/><path d="M144.40 49.70 Q145.90 61.70 144.40 73.70 Q142.90 61.70 144.40 49.70 Z" fill="#fae68a" fill-opacity="0.9"/><path d="M159.60 49.70 Q161.10 61.70 159.60 73.70 Q158.10 61.70 159.60 49.70 Z" fill="#fae68a" fill-opacity="0.9"/><path d="M174.80 49.70 Q176.30 61.70 174.80 73.70 Q173.30 61.70 174.80 49.70 Z" fill="#fae68a" fill-opacity="0.9"/><path d="M190.00 49.70 Q191.50 61.70 190.00 73.70 Q188.50 61.70 190.00 49.70 Z" fill="#fae68a" fill-opacity="0.9"/><path d="M205.20 49.70 Q206.70 61.70 205.20 73.70 Q203.70 61.70 205.20 49.70 Z" fill="#fae68a" fill-opacity="0.9"/><path d="M220.40 49.70 Q221.90 61.70 220.40 73.70 Q218.90 61.70 220.40 49.70 Z" fill="#fae68a" fill-opacity="0.9"/><path d="M235.60 49.70 Q237.10 61.70 235.60 73.70 Q234.10 61.70 235.60 49.70 Z" fill="#fae68a" fill-opacity="0.9"/><path d="M250.80 49.70 Q252.30 61.70 250.80 73.70 Q249.30 61.70 250.80 49.70 Z" fill="#fae68a" fill-opacity="0.9"/><path d="M266.00 49.70 Q267.50 61.70 266.00 73.70 Q264.50 61.70 266.00 49.70 Z" fill="#fae68a" fill-opacity="0.9"/><path d="M281.20 49.70 Q282.70 61.70 281.20 73.70 Q279.70 61.70 281.20 49.70 Z" fill="#fae68a" fill-opacity="0.9"/><path d="M296.40 49.70 Q297.90 61.70 296.40 73.70 Q294.90 61.70 296.40 49.70 Z" fill="#fae68a" fill-opacity="0.9"/><path d="M311.60 49.70 Q313.10 61.70 311.60 73.70 Q310.10 61.70 311.60 49.70 Z" fill="#fae68a" fill-opacity="0.9"/><path d="M326.80 49.70 Q328.30 61.70 326.80 73.70 Q325.30 61.70 326.80 49.70 Z" fill="#fae68a" fill-opacity="0.9"/><path d="M342.00 49.70 Q343.50 61.70 342.00 73.70 Q340.50 61.70 342.00 49.70 Z" fill="#fae68a" fill-opacity="0.9"/><path d="M357.20 49.70 Q358.70 61.70 357.20 73.70 Q355.70 61.70 357.20 49.70 Z" fill="#fae68a" fill-opacity="0.9"/><path d="M372.40 49.70 Q373.90 61.70 372.40 73.70 Q370.90 61.70 372.40 49.70 Z" fill="#fae68a" fill-opacity="0.9"/><path d="M387.60 49.70 Q389.10 61.70 387.60 73.70 Q386.10 61.70 387.60 49.70 Z" fill="#fae68a" fill-opacity="0.9"/><path d="M402.80 49.70 Q404.30 61.70 402.80 73.70 Q401.30 61.70 402.80 49.70 Z" fill="#fae68a" fill-opacity="0.9"/><path d="M228.00 54.20 Q229.40 61.70 228.00 69.20 Q226.60 61.70 228.00 54.20 Z" fill="#fae68a" fill-opacity="0.85"/><path d="M231.10 54.20 Q232.50 61.70 231.10 69.20 Q229.70 61.70 231.10 54.20 Z" fill="#fae68a" fill-opacity="0.85"/><path d="M234.20 54.20 Q235.60 61.70 234.20 69.20 Q232.80 61.70 234.20 54.20 Z" fill="#fae68a" fill-opacity="0.85"/><path d="M237.30 54.20 Q238.70 61.70 237.30 69.20 Q235.90 61.70 237.30 54.20 Z" fill="#fae68a" fill-opacity="0.85"/><path d="M240.10 54.20 Q241.50 61.70 240.10 69.20 Q238.70 61.70 240.10 54.20 Z" fill="#fae68a" fill-opacity="0.85"/><circle cx="17.20" cy="61.69999999999999" r="1.1" fill="#fae68a" fill-opacity="0.9"/><circle cx="43.80" cy="61.69999999999999" r="1.1" fill="#fae68a" fill-opacity="0.9"/><circle cx="74.50" cy="61.69999999999999" r="1.1" fill="#fae68a" fill-opacity="0.9"/><circle cx="93.50" cy="61.69999999999999" r="1.1" fill="#fae68a" fill-opacity="0.9"/><circle cx="119.90" cy="61.69999999999999" r="1.1" fill="#fae68a" fill-opacity="0.9"/><circle cx="138.20" cy="61.69999999999999" r="1.1" fill="#fae68a" fill-opacity="0.9"/><circle cx="152.50" cy="61.69999999999999" r="1.1" fill="#fae68a" fill-opacity="0.9"/><circle cx="180.50" cy="61.69999999999999" r="1.1" fill="#fae68a" fill-opacity="0.9"/><circle cx="196.00" cy="61.69999999999999" r="1.1" fill="#fae68a" fill-opacity="0.9"/><path d="M7.60 82.40 Q9.20 96.40 7.60 110.40 Q6.00 96.40 7.60 82.40 Z" fill="#fae68a" fill-opacity="0.85"/><path d="M15.20 82.40 Q16.80 96.40 15.20 110.40 Q13.60 96.40 15.20 82.40 Z" fill="#fae68a" fill-opacity="0.85"/><path d="M22.80 82.40 Q24.40 96.40 22.80 110.40 Q21.20 96.40 22.80 82.40 Z" fill="#fae68a" fill-opacity="0.85"/><path d="M26.60 82.40 Q28.20 96.40 26.60 110.40 Q25.00 96.40 26.60 82.40 Z" fill="#fae68a" fill-opacity="0.85"/><path d="M30.40 82.40 Q32.00 96.40 30.40 110.40 Q28.80 96.40 30.40 82.40 Z" fill="#fae68a" fill-opacity="0.85"/><path d="M38.00 82.40 Q39.60 96.40 38.00 110.40 Q36.40 96.40 38.00 82.40 Z" fill="#fae68a" fill-opacity="0.85"/><path d="M45.60 82.40 Q47.20 96.40 45.60 110.40 Q44.00 96.40 45.60 82.40 Z" fill="#fae68a" fill-opacity="0.85"/><path d="M53.20 82.40 Q54.80 96.40 53.20 110.40 Q51.60 96.40 53.20 82.40 Z" fill="#fae68a" fill-opacity="0.85"/><path d="M57.00 82.40 Q58.60 96.40 57.00 110.40 Q55.40 96.40 57.00 82.40 Z" fill="#fae68a" fill-opacity="0.85"/><path d="M60.80 82.40 Q62.40 96.40 60.80 110.40 Q59.20 96.40 60.80 82.40 Z" fill="#fae68a" fill-opacity="0.85"/><path d="M68.40 82.40 Q70.00 96.40 68.40 110.40 Q66.80 96.40 68.40 82.40 Z" fill="#fae68a" fill-opacity="0.85"/><path d="M76.00 82.40 Q77.60 96.40 76.00 110.40 Q74.40 96.40 76.00 82.40 Z" fill="#fae68a" fill-opacity="0.85"/><path d="M83.60 82.40 Q85.20 96.40 83.60 110.40 Q82.00 96.40 83.60 82.40 Z" fill="#fae68a" fill-opacity="0.85"/><path d="M91.20 82.40 Q92.80 96.40 91.20 110.40 Q89.60 96.40 91.20 82.40 Z" fill="#fae68a" fill-opacity="0.85"/><path d="M98.80 82.40 Q100.40 96.40 98.80 110.40 Q97.20 96.40 98.80 82.40 Z" fill="#fae68a" fill-opacity="0.85"/><path d="M106.40 82.40 Q108.00 96.40 106.40 110.40 Q104.80 96.40 106.40 82.40 Z" fill="#fae68a" fill-opacity="0.85"/><path d="M114.00 82.40 Q115.60 96.40 114.00 110.40 Q112.40 96.40 114.00 82.40 Z" fill="#fae68a" fill-opacity="0.85"/><path d="M117.80 82.40 Q119.40 96.40 117.80 110.40 Q116.20 96.40 117.80 82.40 Z" fill="#fae68a" fill-opacity="0.85"/><path d="M121.60 82.40 Q123.20 96.40 121.60 110.40 Q120.00 96.40 121.60 82.40 Z" fill="#fae68a" fill-opacity="0.85"/><path d="M129.20 82.40 Q130.80 96.40 129.20 110.40 Q127.60 96.40 129.20 82.40 Z" fill="#fae68a" fill-opacity="0.85"/><path d="M136.80 82.40 Q138.40 96.40 136.80 110.40 Q135.20 96.40 136.80 82.40 Z" fill="#fae68a" fill-opacity="0.85"/><path d="M144.40 82.40 Q146.00 96.40 144.40 110.40 Q142.80 96.40 144.40 82.40 Z" fill="#fae68a" fill-opacity="0.85"/><path d="M152.00 82.40 Q153.60 96.40 152.00 110.40 Q150.40 96.40 152.00 82.40 Z" fill="#fae68a" fill-opacity="0.85"/><path d="M159.60 82.40 Q161.20 96.40 159.60 110.40 Q158.00 96.40 159.60 82.40 Z" fill="#fae68a" fill-opacity="0.85"/><path d="M167.20 82.40 Q168.80 96.40 167.20 110.40 Q165.60 96.40 167.20 82.40 Z" fill="#fae68a" fill-opacity="0.85"/><path d="M174.80 82.40 Q176.40 96.40 174.80 110.40 Q173.20 96.40 174.80 82.40 Z" fill="#fae68a" fill-opacity="0.85"/><path d="M178.60 82.40 Q180.20 96.40 178.60 110.40 Q177.00 96.40 178.60 82.40 Z" fill="#fae68a" fill-opacity="0.85"/><path d="M182.40 82.40 Q184.00 96.40 182.40 110.40 Q180.80 96.40 182.40 82.40 Z" fill="#fae68a" fill-opacity="0.85"/><path d="M190.00 82.40 Q191.60 96.40 190.00 110.40 Q188.40 96.40 190.00 82.40 Z" fill="#fae68a" fill-opacity="0.85"/><path d="M197.60 82.40 Q199.20 96.40 197.60 110.40 Q196.00 96.40 197.60 82.40 Z" fill="#fae68a" fill-opacity="0.85"/><path d="M205.20 82.40 Q206.80 96.40 205.20 110.40 Q203.60 96.40 205.20 82.40 Z" fill="#fae68a" fill-opacity="0.85"/><path d="M212.80 82.40 Q214.40 96.40 212.80 110.40 Q211.20 96.40 212.80 82.40 Z" fill="#fae68a" fill-opacity="0.85"/><path d="M220.40 82.40 Q222.00 96.40 220.40 110.40 Q218.80 96.40 220.40 82.40 Z" fill="#fae68a" fill-opacity="0.85"/><path d="M228.00 82.40 Q229.60 96.40 228.00 110.40 Q226.40 96.40 228.00 82.40 Z" fill="#fae68a" fill-opacity="0.85"/><path d="M235.60 82.40 Q237.20 96.40 235.60 110.40 Q234.00 96.40 235.60 82.40 Z" fill="#fae68a" fill-opacity="0.85"/><path d="M239.40 82.40 Q241.00 96.40 239.40 110.40 Q237.80 96.40 239.40 82.40 Z" fill="#fae68a" fill-opacity="0.85"/><path d="M243.20 82.40 Q244.80 96.40 243.20 110.40 Q241.60 96.40 243.20 82.40 Z" fill="#fae68a" fill-opacity="0.85"/><path d="M247.00 82.40 Q248.60 96.40 247.00 110.40 Q245.40 96.40 247.00 82.40 Z" fill="#fae68a" fill-opacity="0.85"/><path d="M250.80 82.40 Q252.40 96.40 250.80 110.40 Q249.20 96.40 250.80 82.40 Z" fill="#fae68a" fill-opacity="0.85"/><path d="M258.40 82.40 Q260.00 96.40 258.40 110.40 Q256.80 96.40 258.40 82.40 Z" fill="#fae68a" fill-opacity="0.85"/><path d="M266.00 82.40 Q267.60 96.40 266.00 110.40 Q264.40 96.40 266.00 82.40 Z" fill="#fae68a" fill-opacity="0.85"/><path d="M273.60 82.40 Q275.20 96.40 273.60 110.40 Q272.00 96.40 273.60 82.40 Z" fill="#fae68a" fill-opacity="0.85"/><path d="M281.20 82.40 Q282.80 96.40 281.20 110.40 Q279.60 96.40 281.20 82.40 Z" fill="#fae68a" fill-opacity="0.85"/><path d="M288.80 82.40 Q290.40 96.40 288.80 110.40 Q287.20 96.40 288.80 82.40 Z" fill="#fae68a" fill-opacity="0.85"/><path d="M296.40 82.40 Q298.00 96.40 296.40 110.40 Q294.80 96.40 296.40 82.40 Z" fill="#fae68a" fill-opacity="0.85"/><path d="M304.00 82.40 Q305.60 96.40 304.00 110.40 Q302.40 96.40 304.00 82.40 Z" fill="#fae68a" fill-opacity="0.85"/><path d="M311.60 82.40 Q313.20 96.40 311.60 110.40 Q310.00 96.40 311.60 82.40 Z" fill="#fae68a" fill-opacity="0.85"/><path d="M319.20 82.40 Q320.80 96.40 319.20 110.40 Q317.60 96.40 319.20 82.40 Z" fill="#fae68a" fill-opacity="0.85"/><path d="M326.80 82.40 Q328.40 96.40 326.80 110.40 Q325.20 96.40 326.80 82.40 Z" fill="#fae68a" fill-opacity="0.85"/><path d="M334.40 82.40 Q336.00 96.40 334.40 110.40 Q332.80 96.40 334.40 82.40 Z" fill="#fae68a" fill-opacity="0.85"/><path d="M342.00 82.40 Q343.60 96.40 342.00 110.40 Q340.40 96.40 342.00 82.40 Z" fill="#fae68a" fill-opacity="0.85"/><path d="M349.60 82.40 Q351.20 96.40 349.60 110.40 Q348.00 96.40 349.60 82.40 Z" fill="#fae68a" fill-opacity="0.85"/><path d="M357.20 82.40 Q358.80 96.40 357.20 110.40 Q355.60 96.40 357.20 82.40 Z" fill="#fae68a" fill-opacity="0.85"/><path d="M364.80 82.40 Q366.40 96.40 364.80 110.40 Q363.20 96.40 364.80 82.40 Z" fill="#fae68a" fill-opacity="0.85"/><path d="M372.40 82.40 Q374.00 96.40 372.40 110.40 Q370.80 96.40 372.40 82.40 Z" fill="#fae68a" fill-opacity="0.85"/><path d="M380.00 82.40 Q381.60 96.40 380.00 110.40 Q378.40 96.40 380.00 82.40 Z" fill="#fae68a" fill-opacity="0.85"/><path d="M387.60 82.40 Q389.20 96.40 387.60 110.40 Q386.00 96.40 387.60 82.40 Z" fill="#fae68a" fill-opacity="0.85"/><path d="M395.20 82.40 Q396.80 96.40 395.20 110.40 Q393.60 96.40 395.20 82.40 Z" fill="#fae68a" fill-opacity="0.85"/><path d="M402.80 82.40 Q404.40 96.40 402.80 110.40 Q401.20 96.40 402.80 82.40 Z" fill="#fae68a" fill-opacity="0.85"/><path d="M410.40 82.40 Q412.00 96.40 410.40 110.40 Q408.80 96.40 410.40 82.40 Z" fill="#fae68a" fill-opacity="0.85"/></svg>
<div class="a" style="left:476.6px;top:141px;width:0.9px;height:129px;background:#9a9a9c;"></div>
<svg class="a" style="left:472.7px;top:140.5px" width="9" height="13" viewBox="0 0 9 13"><path d="M1 2 Q1 0.5 2.5 0.5 H6.5 Q8 0.5 8 2 V8.5 L4.5 12 L1 8.5 Z" fill="#9c9c9e" stroke="#bdbdbf" stroke-width="0.6"/><path d="M3 3 H6 M3 5 H6 M3 7 H6" stroke="#77777a" stroke-width="0.5"/></svg>
<div class="a" style="left:272px;top:276.5px;width:69px;height:16.5px;background:#262628;border-radius:4px;"></div>
<div class="a" style="left:272px;top:276.5px;width:21px;height:16.5px;background:#3a3a3c;border-radius:4px;"></div>
<svg class="a" style="left:277px;top:280px" width="11" height="9" viewBox="0 0 11 9"><rect x="0.8" y="0.8" width="9.4" height="7" rx="1.5" stroke="#e6e6e6" stroke-width="1.1" fill="none"/></svg>
<svg class="a" style="left:298.5px;top:279.5px" width="14" height="10" viewBox="0 0 14 10"><path d="M1 8.5 H4 L9 2 H13" stroke="#e6e6e6" stroke-width="1.3" fill="none" stroke-linecap="round"/><circle cx="4.3" cy="8" r="1.2" fill="#e6e6e6"/><circle cx="9" cy="2.3" r="1.2" fill="#e6e6e6"/></svg>
<div class="a" style="left:316px;top:279px;width:0.6px;height:12px;background:#3a3a3c;"></div>
<div class="a" style="left:319px;top:279px;width:0.6px;height:12px;background:#3a3a3c;"></div>
<svg class="a" style="left:325px;top:278px" width="8" height="13" viewBox="0 0 8 13"><rect x="2.5" y="0.5" width="1.2" height="2" fill="#e6e6e6"/><rect x="1.2" y="4" width="3.8" height="1.8" fill="#e6e6e6"/><rect x="1.2" y="6.8" width="3.8" height="1.8" fill="#e6e6e6"/><rect x="1.2" y="9.6" width="3.8" height="1.8" fill="#e6e6e6"/></svg>
<svg class="a" style="left:353px;top:279.5px" width="11" height="10" viewBox="0 0 11 10"><path d="M1 3.3 H3 L6 0.8 V9.2 L3 6.7 H1 Z" fill="#ececec"/><path d="M7.5 5 H10" stroke="#ececec" stroke-width="0.8"/></svg>
<div class="t" style="left:375.2px;top:278.17px;font-size:5px;color:#8e8e90;transform:scaleX(0.93);transform-origin:0 0;-webkit-text-stroke:0.2px #8e8e90;">Preset</div>
<div class="t" style="left:375.2px;top:285.7px;font-size:6.5px;color:#e6e6e6;-webkit-text-stroke:0.2px #e6e6e6;">Strobe Lights</div>
<svg class="a" style="left:414px;top:286px" width="4" height="4" viewBox="0 0 4 4"><path d="M0.6 1 L2 2.6 L3.4 1" stroke="#666" stroke-width="0.8" fill="none"/></svg>
<div class="a" style="left:481px;top:277px;width:73px;height:15.5px;background:#262628;border-radius:4px;"></div>
<div class="a" style="left:481px;top:277px;width:21.5px;height:15.5px;background:#4a4a4c;border-radius:4px;"></div>
<div class="t" style="left:485.3px;top:282.46px;font-size:5.6px;color:#e6e6e6;transform:scaleX(0.99);transform-origin:0 0;-webkit-text-stroke:0.2px #e6e6e6;">Main</div>
<div class="t" style="left:506.8px;top:282.46px;font-size:5.6px;color:#e6e6e6;-webkit-text-stroke:0.2px #e6e6e6;">Details</div>
<div class="t" style="left:532.7px;top:282.46px;font-size:5.6px;color:#e6e6e6;transform:scaleX(0.99);transform-origin:0 0;-webkit-text-stroke:0.2px #e6e6e6;">Manual</div>
<svg class="a" style="left:703px;top:279.5px" width="13" height="10" viewBox="0 0 13 10"><path d="M0.5 1 H8 M0.5 3.5 H6 M0.5 6 H4.5 M0.5 8.5 H4.5" stroke="#e6e6e6" stroke-width="0.9"/><circle cx="9.5" cy="6.5" r="3.3" fill="#e6e6e6"/><circle cx="9.5" cy="6.5" r="1.1" fill="#1c1c1e"/></svg>
<div class="a" style="left:725.8px;top:283.3px;width:1.9px;height:1.9px;background:#e6e6e6;border-radius:1px;"></div>
<div class="a" style="left:729.1px;top:283.3px;width:1.9px;height:1.9px;background:#e6e6e6;border-radius:1px;"></div>
<div class="a" style="left:732.4px;top:283.3px;width:1.9px;height:1.9px;background:#e6e6e6;border-radius:1px;"></div>
<div class="a" style="left:744px;top:282.3px;width:16px;height:0.8px;background:#4a4a4c;"></div>
<div class="a" style="left:744px;top:284.6px;width:16px;height:0.8px;background:#4a4a4c;"></div>
<svg class="a" style="left:268px;top:295px" width="500" height="13" viewBox="0 0 500 13"><rect x="-0.10" y="0" width="0.7" height="13" fill="#48484a"/><rect x="7.50" y="10" width="0.6" height="3" fill="#333335"/><rect x="15.09" y="10" width="0.6" height="3" fill="#333335"/><rect x="22.69" y="10" width="0.6" height="3" fill="#333335"/><rect x="30.29" y="0" width="0.7" height="13" fill="#48484a"/><rect x="37.89" y="10" width="0.6" height="3" fill="#333335"/><rect x="45.48" y="10" width="0.6" height="3" fill="#333335"/><rect x="53.08" y="10" width="0.6" height="3" fill="#333335"/><rect x="60.68" y="0" width="0.7" height="13" fill="#48484a"/><rect x="68.28" y="10" width="0.6" height="3" fill="#333335"/><rect x="75.87" y="10" width="0.6" height="3" fill="#333335"/><rect x="83.47" y="10" width="0.6" height="3" fill="#333335"/><rect x="91.07" y="0" width="0.7" height="13" fill="#48484a"/><rect x="98.67" y="10" width="0.6" height="3" fill="#333335"/><rect x="106.26" y="10" width="0.6" height="3" fill="#333335"/><rect x="113.86" y="10" width="0.6" height="3" fill="#333335"/><rect x="121.46" y="0" width="0.7" height="13" fill="#48484a"/><rect x="129.06" y="10" width="0.6" height="3" fill="#333335"/><rect x="136.65" y="10" width="0.6" height="3" fill="#333335"/><rect x="144.25" y="10" width="0.6" height="3" fill="#333335"/><rect x="151.85" y="0" width="0.7" height="13" fill="#48484a"/><rect x="159.45" y="10" width="0.6" height="3" fill="#333335"/><rect x="167.04" y="10" width="0.6" height="3" fill="#333335"/><rect x="174.64" y="10" width="0.6" height="3" fill="#333335"/><rect x="182.24" y="0" width="0.7" height="13" fill="#48484a"/><rect x="189.84" y="10" width="0.6" height="3" fill="#333335"/><rect x="197.44" y="10" width="0.6" height="3" fill="#333335"/><rect x="205.03" y="10" width="0.6" height="3" fill="#333335"/><rect x="212.63" y="0" width="0.7" height="13" fill="#48484a"/><rect x="220.23" y="10" width="0.6" height="3" fill="#333335"/><rect x="227.82" y="10" width="0.6" height="3" fill="#333335"/><rect x="235.42" y="10" width="0.6" height="3" fill="#333335"/><rect x="243.02" y="0" width="0.7" height="13" fill="#48484a"/><rect x="250.62" y="10" width="0.6" height="3" fill="#333335"/><rect x="258.22" y="10" width="0.6" height="3" fill="#333335"/><rect x="265.81" y="10" width="0.6" height="3" fill="#333335"/><rect x="273.41" y="0" width="0.7" height="13" fill="#48484a"/><rect x="281.01" y="10" width="0.6" height="3" fill="#333335"/><rect x="288.61" y="10" width="0.6" height="3" fill="#333335"/><rect x="296.20" y="10" width="0.6" height="3" fill="#333335"/><rect x="303.80" y="0" width="0.7" height="13" fill="#48484a"/><rect x="311.40" y="10" width="0.6" height="3" fill="#333335"/><rect x="319.00" y="10" width="0.6" height="3" fill="#333335"/><rect x="326.59" y="10" width="0.6" height="3" fill="#333335"/><rect x="334.19" y="0" width="0.7" height="13" fill="#48484a"/><rect x="341.79" y="10" width="0.6" height="3" fill="#333335"/><rect x="349.39" y="10" width="0.6" height="3" fill="#333335"/><rect x="356.98" y="10" width="0.6" height="3" fill="#333335"/><rect x="364.58" y="0" width="0.7" height="13" fill="#48484a"/><rect x="372.18" y="10" width="0.6" height="3" fill="#333335"/><rect x="379.77" y="10" width="0.6" height="3" fill="#333335"/><rect x="387.37" y="10" width="0.6" height="3" fill="#333335"/><rect x="394.97" y="0" width="0.7" height="13" fill="#48484a"/><rect x="402.57" y="10" width="0.6" height="3" fill="#333335"/><rect x="410.17" y="10" width="0.6" height="3" fill="#333335"/><rect x="417.76" y="10" width="0.6" height="3" fill="#333335"/><rect x="425.36" y="0" width="0.7" height="13" fill="#48484a"/><rect x="432.96" y="10" width="0.6" height="3" fill="#333335"/><rect x="440.56" y="10" width="0.6" height="3" fill="#333335"/><rect x="448.15" y="10" width="0.6" height="3" fill="#333335"/><rect x="455.75" y="0" width="0.7" height="13" fill="#48484a"/><rect x="463.35" y="10" width="0.6" height="3" fill="#333335"/><rect x="470.95" y="10" width="0.6" height="3" fill="#333335"/><rect x="478.54" y="10" width="0.6" height="3" fill="#333335"/><rect x="486.14" y="0" width="0.7" height="13" fill="#48484a"/><rect x="493.74" y="10" width="0.6" height="3" fill="#333335"/><rect x="501.34" y="10" width="0.6" height="3" fill="#333335"/><rect x="508.93" y="10" width="0.6" height="3" fill="#333335"/></svg>
<div class="t" style="left:269.3px;top:299.05px;font-size:6.2px;color:#909092;-webkit-text-stroke:0.1px #909092;">1</div>
<div class="t" style="left:299.69px;top:299.05px;font-size:6.2px;color:#909092;-webkit-text-stroke:0.1px #909092;">2</div>
<div class="t" style="left:330.08px;top:299.05px;font-size:6.2px;color:#909092;-webkit-text-stroke:0.1px #909092;">3</div>
<div class="t" style="left:360.47px;top:299.05px;font-size:6.2px;color:#909092;-webkit-text-stroke:0.1px #909092;">4</div>
<div class="t" style="left:390.86px;top:299.05px;font-size:6.2px;color:#909092;-webkit-text-stroke:0.1px #909092;">5</div>
<div class="t" style="left:421.25px;top:299.05px;font-size:6.2px;color:#909092;-webkit-text-stroke:0.1px #909092;">6</div>
<div class="t" style="left:451.64px;top:299.05px;font-size:6.2px;color:#909092;-webkit-text-stroke:0.1px #909092;">7</div>
<div class="t" style="left:482.03px;top:299.05px;font-size:6.2px;color:#909092;-webkit-text-stroke:0.1px #909092;">8</div>
<div class="t" style="left:512.42px;top:299.05px;font-size:6.2px;color:#909092;-webkit-text-stroke:0.1px #909092;">9</div>
<div class="t" style="left:542.81px;top:299.05px;font-size:6.2px;color:#909092;-webkit-text-stroke:0.1px #909092;">10</div>
<div class="t" style="left:573.2px;top:299.05px;font-size:6.2px;color:#909092;-webkit-text-stroke:0.1px #909092;">11</div>
<div class="t" style="left:603.59px;top:299.05px;font-size:6.2px;color:#909092;-webkit-text-stroke:0.1px #909092;">12</div>
<div class="t" style="left:633.98px;top:299.05px;font-size:6.2px;color:#909092;-webkit-text-stroke:0.1px #909092;">13</div>
<div class="t" style="left:664.37px;top:299.05px;font-size:6.2px;color:#909092;-webkit-text-stroke:0.1px #909092;">14</div>
<div class="t" style="left:694.76px;top:299.05px;font-size:6.2px;color:#909092;-webkit-text-stroke:0.1px #909092;">15</div>
<div class="t" style="left:725.15px;top:299.05px;font-size:6.2px;color:#909092;-webkit-text-stroke:0.1px #909092;">16</div>
<div class="t" style="left:755.54px;top:299.05px;font-size:6.2px;color:#909092;-webkit-text-stroke:0.1px #909092;">17</div>
<div class="a" style="left:268px;top:308px;width:500px;height:21.5px;background:#d2ab17;border-radius:2px;"></div>
<div class="a" style="left:268px;top:308px;width:500px;height:12px;background:#f6efc0;border-radius:2px;"></div>
<div class="a" style="left:268px;top:318px;width:500px;height:2px;background:#f6efc0;"></div>
<svg class="a" style="left:268px;top:308px" width="500" height="21.5" viewBox="0 0 500 21.5"><rect x="-0.10" y="0" width="0.6" height="12" fill="#d8d0a0"/><rect x="7.50" y="8" width="0.5" height="4" fill="#e6dcaa"/><rect x="15.09" y="8" width="0.5" height="4" fill="#e6dcaa"/><rect x="22.69" y="8" width="0.5" height="4" fill="#e6dcaa"/><rect x="30.29" y="0" width="0.6" height="12" fill="#d8d0a0"/><rect x="37.89" y="8" width="0.5" height="4" fill="#e6dcaa"/><rect x="45.48" y="8" width="0.5" height="4" fill="#e6dcaa"/><rect x="53.08" y="8" width="0.5" height="4" fill="#e6dcaa"/><rect x="60.68" y="0" width="0.6" height="12" fill="#d8d0a0"/><rect x="68.28" y="8" width="0.5" height="4" fill="#e6dcaa"/><rect x="75.87" y="8" width="0.5" height="4" fill="#e6dcaa"/><rect x="83.47" y="8" width="0.5" height="4" fill="#e6dcaa"/><rect x="91.07" y="0" width="0.6" height="12" fill="#d8d0a0"/><rect x="98.67" y="8" width="0.5" height="4" fill="#e6dcaa"/><rect x="106.26" y="8" width="0.5" height="4" fill="#e6dcaa"/><rect x="113.86" y="8" width="0.5" height="4" fill="#e6dcaa"/><rect x="121.46" y="0" width="0.6" height="12" fill="#d8d0a0"/><rect x="129.06" y="8" width="0.5" height="4" fill="#e6dcaa"/><rect x="136.65" y="8" width="0.5" height="4" fill="#e6dcaa"/><rect x="144.25" y="8" width="0.5" height="4" fill="#e6dcaa"/><rect x="151.85" y="0" width="0.6" height="12" fill="#d8d0a0"/><rect x="159.45" y="8" width="0.5" height="4" fill="#e6dcaa"/><rect x="167.04" y="8" width="0.5" height="4" fill="#e6dcaa"/><rect x="174.64" y="8" width="0.5" height="4" fill="#e6dcaa"/><rect x="182.24" y="0" width="0.6" height="12" fill="#d8d0a0"/><rect x="189.84" y="8" width="0.5" height="4" fill="#e6dcaa"/><rect x="197.44" y="8" width="0.5" height="4" fill="#e6dcaa"/><rect x="205.03" y="8" width="0.5" height="4" fill="#e6dcaa"/><rect x="212.63" y="0" width="0.6" height="12" fill="#d8d0a0"/><rect x="220.23" y="8" width="0.5" height="4" fill="#e6dcaa"/><rect x="227.82" y="8" width="0.5" height="4" fill="#e6dcaa"/><rect x="235.42" y="8" width="0.5" height="4" fill="#e6dcaa"/><rect x="243.02" y="0" width="0.6" height="12" fill="#d8d0a0"/><rect x="250.62" y="8" width="0.5" height="4" fill="#e6dcaa"/><rect x="258.22" y="8" width="0.5" height="4" fill="#e6dcaa"/><rect x="265.81" y="8" width="0.5" height="4" fill="#e6dcaa"/><rect x="273.41" y="0" width="0.6" height="12" fill="#d8d0a0"/><rect x="281.01" y="8" width="0.5" height="4" fill="#e6dcaa"/><rect x="288.61" y="8" width="0.5" height="4" fill="#e6dcaa"/><rect x="296.20" y="8" width="0.5" height="4" fill="#e6dcaa"/><rect x="303.80" y="0" width="0.6" height="12" fill="#d8d0a0"/><rect x="311.40" y="8" width="0.5" height="4" fill="#e6dcaa"/><rect x="319.00" y="8" width="0.5" height="4" fill="#e6dcaa"/><rect x="326.59" y="8" width="0.5" height="4" fill="#e6dcaa"/><rect x="334.19" y="0" width="0.6" height="12" fill="#d8d0a0"/><rect x="341.79" y="8" width="0.5" height="4" fill="#e6dcaa"/><rect x="349.39" y="8" width="0.5" height="4" fill="#e6dcaa"/><rect x="356.98" y="8" width="0.5" height="4" fill="#e6dcaa"/><rect x="364.58" y="0" width="0.6" height="12" fill="#d8d0a0"/><rect x="372.18" y="8" width="0.5" height="4" fill="#e6dcaa"/><rect x="379.77" y="8" width="0.5" height="4" fill="#e6dcaa"/><rect x="387.37" y="8" width="0.5" height="4" fill="#e6dcaa"/><rect x="394.97" y="0" width="0.6" height="12" fill="#d8d0a0"/><rect x="402.57" y="8" width="0.5" height="4" fill="#e6dcaa"/><rect x="410.17" y="8" width="0.5" height="4" fill="#e6dcaa"/><rect x="417.76" y="8" width="0.5" height="4" fill="#e6dcaa"/><rect x="425.36" y="0" width="0.6" height="12" fill="#d8d0a0"/><rect x="432.96" y="8" width="0.5" height="4" fill="#e6dcaa"/><rect x="440.56" y="8" width="0.5" height="4" fill="#e6dcaa"/><rect x="448.15" y="8" width="0.5" height="4" fill="#e6dcaa"/><rect x="455.75" y="0" width="0.6" height="12" fill="#d8d0a0"/><rect x="463.35" y="8" width="0.5" height="4" fill="#e6dcaa"/><rect x="470.95" y="8" width="0.5" height="4" fill="#e6dcaa"/><rect x="478.54" y="8" width="0.5" height="4" fill="#e6dcaa"/><rect x="486.14" y="0" width="0.6" height="12" fill="#d8d0a0"/><rect x="493.74" y="8" width="0.5" height="4" fill="#e6dcaa"/><rect x="501.34" y="8" width="0.5" height="4" fill="#e6dcaa"/><rect x="508.93" y="8" width="0.5" height="4" fill="#e6dcaa"/><path d="M1.60 13.70 L4.60 16.70 L1.60 19.70 Z" fill="#f6e9a8"/><rect x="5.10" y="16.4" width="2.5" height="0.7" fill="#f6e9a8" fill-opacity="0.8"/><rect x="6.00" y="14.6" width="0.8" height="4.2" fill="#f6e9a8" fill-opacity="0.6"/><path d="M9.20 13.70 L12.20 16.70 L9.20 19.70 Z" fill="#f6e9a8"/><rect x="12.70" y="16.4" width="2.5" height="0.7" fill="#f6e9a8" fill-opacity="0.8"/><rect x="13.60" y="14.6" width="0.8" height="4.2" fill="#f6e9a8" fill-opacity="0.6"/><path d="M16.80 13.70 L19.80 16.70 L16.80 19.70 Z" fill="#f6e9a8"/><rect x="20.30" y="16.4" width="2.5" height="0.7" fill="#f6e9a8" fill-opacity="0.8"/><rect x="21.20" y="14.6" width="0.8" height="4.2" fill="#f6e9a8" fill-opacity="0.6"/><path d="M24.39 13.70 L27.39 16.70 L24.39 19.70 Z" fill="#f6e9a8"/><rect x="27.89" y="16.4" width="2.5" height="0.7" fill="#f6e9a8" fill-opacity="0.8"/><rect x="28.79" y="14.6" width="0.8" height="4.2" fill="#f6e9a8" fill-opacity="0.6"/><path d="M31.99 13.70 L34.99 16.70 L31.99 19.70 Z" fill="#f6e9a8"/><rect x="35.49" y="16.4" width="2.5" height="0.7" fill="#f6e9a8" fill-opacity="0.8"/><rect x="36.39" y="14.6" width="0.8" height="4.2" fill="#f6e9a8" fill-opacity="0.6"/><path d="M39.59 13.70 L42.59 16.70 L39.59 19.70 Z" fill="#f6e9a8"/><rect x="43.09" y="16.4" width="2.5" height="0.7" fill="#f6e9a8" fill-opacity="0.8"/><rect x="43.99" y="14.6" width="0.8" height="4.2" fill="#f6e9a8" fill-opacity="0.6"/><path d="M47.19 13.70 L50.19 16.70 L47.19 19.70 Z" fill="#f6e9a8"/><rect x="50.69" y="16.4" width="2.5" height="0.7" fill="#f6e9a8" fill-opacity="0.8"/><rect x="51.59" y="14.6" width="0.8" height="4.2" fill="#f6e9a8" fill-opacity="0.6"/><path d="M54.78 13.70 L57.78 16.70 L54.78 19.70 Z" fill="#f6e9a8"/><rect x="58.28" y="16.4" width="2.5" height="0.7" fill="#f6e9a8" fill-opacity="0.8"/><rect x="59.18" y="14.6" width="0.8" height="4.2" fill="#f6e9a8" fill-opacity="0.6"/><path d="M62.38 13.70 L65.38 16.70 L62.38 19.70 Z" fill="#f6e9a8"/><rect x="65.88" y="16.4" width="2.5" height="0.7" fill="#f6e9a8" fill-opacity="0.8"/><rect x="66.78" y="14.6" width="0.8" height="4.2" fill="#f6e9a8" fill-opacity="0.6"/><path d="M69.98 13.70 L72.98 16.70 L69.98 19.70 Z" fill="#f6e9a8"/><rect x="73.48" y="16.4" width="2.5" height="0.7" fill="#f6e9a8" fill-opacity="0.8"/><rect x="74.38" y="14.6" width="0.8" height="4.2" fill="#f6e9a8" fill-opacity="0.6"/><path d="M77.58 13.70 L80.58 16.70 L77.58 19.70 Z" fill="#f6e9a8"/><rect x="81.08" y="16.4" width="2.5" height="0.7" fill="#f6e9a8" fill-opacity="0.8"/><rect x="81.98" y="14.6" width="0.8" height="4.2" fill="#f6e9a8" fill-opacity="0.6"/><path d="M85.17 13.70 L88.17 16.70 L85.17 19.70 Z" fill="#f6e9a8"/><rect x="88.67" y="16.4" width="2.5" height="0.7" fill="#f6e9a8" fill-opacity="0.8"/><rect x="89.57" y="14.6" width="0.8" height="4.2" fill="#f6e9a8" fill-opacity="0.6"/><path d="M92.77 13.70 L95.77 16.70 L92.77 19.70 Z" fill="#f6e9a8"/><rect x="96.27" y="16.4" width="2.5" height="0.7" fill="#f6e9a8" fill-opacity="0.8"/><rect x="97.17" y="14.6" width="0.8" height="4.2" fill="#f6e9a8" fill-opacity="0.6"/><path d="M100.37 13.70 L103.37 16.70 L100.37 19.70 Z" fill="#f6e9a8"/><rect x="103.87" y="16.4" width="2.5" height="0.7" fill="#f6e9a8" fill-opacity="0.8"/><rect x="104.77" y="14.6" width="0.8" height="4.2" fill="#f6e9a8" fill-opacity="0.6"/><path d="M107.97 13.70 L110.97 16.70 L107.97 19.70 Z" fill="#f6e9a8"/><rect x="111.47" y="16.4" width="2.5" height="0.7" fill="#f6e9a8" fill-opacity="0.8"/><rect x="112.37" y="14.6" width="0.8" height="4.2" fill="#f6e9a8" fill-opacity="0.6"/><path d="M115.56 13.70 L118.56 16.70 L115.56 19.70 Z" fill="#f6e9a8"/><rect x="119.06" y="16.4" width="2.5" height="0.7" fill="#f6e9a8" fill-opacity="0.8"/><rect x="119.96" y="14.6" width="0.8" height="4.2" fill="#f6e9a8" fill-opacity="0.6"/><path d="M123.16 13.70 L126.16 16.70 L123.16 19.70 Z" fill="#f6e9a8"/><rect x="126.66" y="16.4" width="2.5" height="0.7" fill="#f6e9a8" fill-opacity="0.8"/><rect x="127.56" y="14.6" width="0.8" height="4.2" fill="#f6e9a8" fill-opacity="0.6"/><path d="M130.76 13.70 L133.76 16.70 L130.76 19.70 Z" fill="#f6e9a8"/><rect x="134.26" y="16.4" width="2.5" height="0.7" fill="#f6e9a8" fill-opacity="0.8"/><rect x="135.16" y="14.6" width="0.8" height="4.2" fill="#f6e9a8" fill-opacity="0.6"/><path d="M138.36 13.70 L141.36 16.70 L138.36 19.70 Z" fill="#f6e9a8"/><rect x="141.86" y="16.4" width="2.5" height="0.7" fill="#f6e9a8" fill-opacity="0.8"/><rect x="142.76" y="14.6" width="0.8" height="4.2" fill="#f6e9a8" fill-opacity="0.6"/><path d="M145.95 13.70 L148.95 16.70 L145.95 19.70 Z" fill="#f6e9a8"/><rect x="149.45" y="16.4" width="2.5" height="0.7" fill="#f6e9a8" fill-opacity="0.8"/><rect x="150.35" y="14.6" width="0.8" height="4.2" fill="#f6e9a8" fill-opacity="0.6"/><path d="M153.55 13.70 L156.55 16.70 L153.55 19.70 Z" fill="#f6e9a8"/><rect x="157.05" y="16.4" width="2.5" height="0.7" fill="#f6e9a8" fill-opacity="0.8"/><rect x="157.95" y="14.6" width="0.8" height="4.2" fill="#f6e9a8" fill-opacity="0.6"/><path d="M161.15 13.70 L164.15 16.70 L161.15 19.70 Z" fill="#f6e9a8"/><rect x="164.65" y="16.4" width="2.5" height="0.7" fill="#f6e9a8" fill-opacity="0.8"/><rect x="165.55" y="14.6" width="0.8" height="4.2" fill="#f6e9a8" fill-opacity="0.6"/><path d="M168.75 13.70 L171.75 16.70 L168.75 19.70 Z" fill="#f6e9a8"/><rect x="172.25" y="16.4" width="2.5" height="0.7" fill="#f6e9a8" fill-opacity="0.8"/><rect x="173.15" y="14.6" width="0.8" height="4.2" fill="#f6e9a8" fill-opacity="0.6"/><path d="M176.34 13.70 L179.34 16.70 L176.34 19.70 Z" fill="#f6e9a8"/><rect x="179.84" y="16.4" width="2.5" height="0.7" fill="#f6e9a8" fill-opacity="0.8"/><rect x="180.74" y="14.6" width="0.8" height="4.2" fill="#f6e9a8" fill-opacity="0.6"/><path d="M183.94 13.70 L186.94 16.70 L183.94 19.70 Z" fill="#f6e9a8"/><rect x="187.44" y="16.4" width="2.5" height="0.7" fill="#f6e9a8" fill-opacity="0.8"/><rect x="188.34" y="14.6" width="0.8" height="4.2" fill="#f6e9a8" fill-opacity="0.6"/><path d="M191.54 13.70 L194.54 16.70 L191.54 19.70 Z" fill="#f6e9a8"/><rect x="195.04" y="16.4" width="2.5" height="0.7" fill="#f6e9a8" fill-opacity="0.8"/><rect x="195.94" y="14.6" width="0.8" height="4.2" fill="#f6e9a8" fill-opacity="0.6"/><path d="M199.14 13.70 L202.14 16.70 L199.14 19.70 Z" fill="#f6e9a8"/><rect x="202.64" y="16.4" width="2.5" height="0.7" fill="#f6e9a8" fill-opacity="0.8"/><rect x="203.54" y="14.6" width="0.8" height="4.2" fill="#f6e9a8" fill-opacity="0.6"/><path d="M206.73 13.70 L209.73 16.70 L206.73 19.70 Z" fill="#f6e9a8"/><rect x="210.23" y="16.4" width="2.5" height="0.7" fill="#f6e9a8" fill-opacity="0.8"/><rect x="211.13" y="14.6" width="0.8" height="4.2" fill="#f6e9a8" fill-opacity="0.6"/><path d="M214.33 13.70 L217.33 16.70 L214.33 19.70 Z" fill="#f6e9a8"/><rect x="217.83" y="16.4" width="2.5" height="0.7" fill="#f6e9a8" fill-opacity="0.8"/><rect x="218.73" y="14.6" width="0.8" height="4.2" fill="#f6e9a8" fill-opacity="0.6"/><path d="M221.93 13.70 L224.93 16.70 L221.93 19.70 Z" fill="#f6e9a8"/><rect x="225.43" y="16.4" width="2.5" height="0.7" fill="#f6e9a8" fill-opacity="0.8"/><rect x="226.33" y="14.6" width="0.8" height="4.2" fill="#f6e9a8" fill-opacity="0.6"/><path d="M229.53 13.70 L232.53 16.70 L229.53 19.70 Z" fill="#f6e9a8"/><rect x="233.03" y="16.4" width="2.5" height="0.7" fill="#f6e9a8" fill-opacity="0.8"/><rect x="233.93" y="14.6" width="0.8" height="4.2" fill="#f6e9a8" fill-opacity="0.6"/><path d="M237.12 13.70 L240.12 16.70 L237.12 19.70 Z" fill="#f6e9a8"/><rect x="240.62" y="16.4" width="2.5" height="0.7" fill="#f6e9a8" fill-opacity="0.8"/><rect x="241.52" y="14.6" width="0.8" height="4.2" fill="#f6e9a8" fill-opacity="0.6"/><path d="M244.72 13.70 L247.72 16.70 L244.72 19.70 Z" fill="#f6e9a8"/><rect x="248.22" y="16.4" width="2.5" height="0.7" fill="#f6e9a8" fill-opacity="0.8"/><rect x="249.12" y="14.6" width="0.8" height="4.2" fill="#f6e9a8" fill-opacity="0.6"/><path d="M252.32 13.70 L255.32 16.70 L252.32 19.70 Z" fill="#f6e9a8"/><rect x="255.82" y="16.4" width="2.5" height="0.7" fill="#f6e9a8" fill-opacity="0.8"/><rect x="256.72" y="14.6" width="0.8" height="4.2" fill="#f6e9a8" fill-opacity="0.6"/><path d="M259.92 13.70 L262.92 16.70 L259.92 19.70 Z" fill="#f6e9a8"/><rect x="263.42" y="16.4" width="2.5" height="0.7" fill="#f6e9a8" fill-opacity="0.8"/><rect x="264.32" y="14.6" width="0.8" height="4.2" fill="#f6e9a8" fill-opacity="0.6"/><path d="M267.51 13.70 L270.51 16.70 L267.51 19.70 Z" fill="#f6e9a8"/><rect x="271.01" y="16.4" width="2.5" height="0.7" fill="#f6e9a8" fill-opacity="0.8"/><rect x="271.91" y="14.6" width="0.8" height="4.2" fill="#f6e9a8" fill-opacity="0.6"/><path d="M275.11 13.70 L278.11 16.70 L275.11 19.70 Z" fill="#f6e9a8"/><rect x="278.61" y="16.4" width="2.5" height="0.7" fill="#f6e9a8" fill-opacity="0.8"/><rect x="279.51" y="14.6" width="0.8" height="4.2" fill="#f6e9a8" fill-opacity="0.6"/><path d="M282.71 13.70 L285.71 16.70 L282.71 19.70 Z" fill="#f6e9a8"/><rect x="286.21" y="16.4" width="2.5" height="0.7" fill="#f6e9a8" fill-opacity="0.8"/><rect x="287.11" y="14.6" width="0.8" height="4.2" fill="#f6e9a8" fill-opacity="0.6"/><path d="M290.31 13.70 L293.31 16.70 L290.31 19.70 Z" fill="#f6e9a8"/><rect x="293.81" y="16.4" width="2.5" height="0.7" fill="#f6e9a8" fill-opacity="0.8"/><rect x="294.71" y="14.6" width="0.8" height="4.2" fill="#f6e9a8" fill-opacity="0.6"/><path d="M297.90 13.70 L300.90 16.70 L297.90 19.70 Z" fill="#f6e9a8"/><rect x="301.40" y="16.4" width="2.5" height="0.7" fill="#f6e9a8" fill-opacity="0.8"/><rect x="302.30" y="14.6" width="0.8" height="4.2" fill="#f6e9a8" fill-opacity="0.6"/><path d="M305.50 13.70 L308.50 16.70 L305.50 19.70 Z" fill="#f6e9a8"/><rect x="309.00" y="16.4" width="2.5" height="0.7" fill="#f6e9a8" fill-opacity="0.8"/><rect x="309.90" y="14.6" width="0.8" height="4.2" fill="#f6e9a8" fill-opacity="0.6"/><path d="M313.10 13.70 L316.10 16.70 L313.10 19.70 Z" fill="#f6e9a8"/><rect x="316.60" y="16.4" width="2.5" height="0.7" fill="#f6e9a8" fill-opacity="0.8"/><rect x="317.50" y="14.6" width="0.8" height="4.2" fill="#f6e9a8" fill-opacity="0.6"/><path d="M320.70 13.70 L323.70 16.70 L320.70 19.70 Z" fill="#f6e9a8"/><rect x="324.20" y="16.4" width="2.5" height="0.7" fill="#f6e9a8" fill-opacity="0.8"/><rect x="325.10" y="14.6" width="0.8" height="4.2" fill="#f6e9a8" fill-opacity="0.6"/><path d="M328.29 13.70 L331.29 16.70 L328.29 19.70 Z" fill="#f6e9a8"/><rect x="331.79" y="16.4" width="2.5" height="0.7" fill="#f6e9a8" fill-opacity="0.8"/><rect x="332.69" y="14.6" width="0.8" height="4.2" fill="#f6e9a8" fill-opacity="0.6"/><path d="M335.89 13.70 L338.89 16.70 L335.89 19.70 Z" fill="#f6e9a8"/><rect x="339.39" y="16.4" width="2.5" height="0.7" fill="#f6e9a8" fill-opacity="0.8"/><rect x="340.29" y="14.6" width="0.8" height="4.2" fill="#f6e9a8" fill-opacity="0.6"/><path d="M343.49 13.70 L346.49 16.70 L343.49 19.70 Z" fill="#f6e9a8"/><rect x="346.99" y="16.4" width="2.5" height="0.7" fill="#f6e9a8" fill-opacity="0.8"/><rect x="347.89" y="14.6" width="0.8" height="4.2" fill="#f6e9a8" fill-opacity="0.6"/><path d="M351.09 13.70 L354.09 16.70 L351.09 19.70 Z" fill="#f6e9a8"/><rect x="354.59" y="16.4" width="2.5" height="0.7" fill="#f6e9a8" fill-opacity="0.8"/><rect x="355.49" y="14.6" width="0.8" height="4.2" fill="#f6e9a8" fill-opacity="0.6"/><path d="M358.68 13.70 L361.68 16.70 L358.68 19.70 Z" fill="#f6e9a8"/><rect x="362.18" y="16.4" width="2.5" height="0.7" fill="#f6e9a8" fill-opacity="0.8"/><rect x="363.08" y="14.6" width="0.8" height="4.2" fill="#f6e9a8" fill-opacity="0.6"/><path d="M366.28 13.70 L369.28 16.70 L366.28 19.70 Z" fill="#f6e9a8"/><rect x="369.78" y="16.4" width="2.5" height="0.7" fill="#f6e9a8" fill-opacity="0.8"/><rect x="370.68" y="14.6" width="0.8" height="4.2" fill="#f6e9a8" fill-opacity="0.6"/><path d="M373.88 13.70 L376.88 16.70 L373.88 19.70 Z" fill="#f6e9a8"/><rect x="377.38" y="16.4" width="2.5" height="0.7" fill="#f6e9a8" fill-opacity="0.8"/><rect x="378.28" y="14.6" width="0.8" height="4.2" fill="#f6e9a8" fill-opacity="0.6"/><path d="M381.48 13.70 L384.48 16.70 L381.48 19.70 Z" fill="#f6e9a8"/><rect x="384.98" y="16.4" width="2.5" height="0.7" fill="#f6e9a8" fill-opacity="0.8"/><rect x="385.88" y="14.6" width="0.8" height="4.2" fill="#f6e9a8" fill-opacity="0.6"/><path d="M389.07 13.70 L392.07 16.70 L389.07 19.70 Z" fill="#f6e9a8"/><rect x="392.57" y="16.4" width="2.5" height="0.7" fill="#f6e9a8" fill-opacity="0.8"/><rect x="393.47" y="14.6" width="0.8" height="4.2" fill="#f6e9a8" fill-opacity="0.6"/><path d="M396.67 13.70 L399.67 16.70 L396.67 19.70 Z" fill="#f6e9a8"/><rect x="400.17" y="16.4" width="2.5" height="0.7" fill="#f6e9a8" fill-opacity="0.8"/><rect x="401.07" y="14.6" width="0.8" height="4.2" fill="#f6e9a8" fill-opacity="0.6"/><path d="M404.27 13.70 L407.27 16.70 L404.27 19.70 Z" fill="#f6e9a8"/><rect x="407.77" y="16.4" width="2.5" height="0.7" fill="#f6e9a8" fill-opacity="0.8"/><rect x="408.67" y="14.6" width="0.8" height="4.2" fill="#f6e9a8" fill-opacity="0.6"/><path d="M411.87 13.70 L414.87 16.70 L411.87 19.70 Z" fill="#f6e9a8"/><rect x="415.37" y="16.4" width="2.5" height="0.7" fill="#f6e9a8" fill-opacity="0.8"/><rect x="416.27" y="14.6" width="0.8" height="4.2" fill="#f6e9a8" fill-opacity="0.6"/><path d="M419.46 13.70 L422.46 16.70 L419.46 19.70 Z" fill="#f6e9a8"/><rect x="422.96" y="16.4" width="2.5" height="0.7" fill="#f6e9a8" fill-opacity="0.8"/><rect x="423.86" y="14.6" width="0.8" height="4.2" fill="#f6e9a8" fill-opacity="0.6"/><path d="M427.06 13.70 L430.06 16.70 L427.06 19.70 Z" fill="#f6e9a8"/><rect x="430.56" y="16.4" width="2.5" height="0.7" fill="#f6e9a8" fill-opacity="0.8"/><rect x="431.46" y="14.6" width="0.8" height="4.2" fill="#f6e9a8" fill-opacity="0.6"/><path d="M434.66 13.70 L437.66 16.70 L434.66 19.70 Z" fill="#f6e9a8"/><rect x="438.16" y="16.4" width="2.5" height="0.7" fill="#f6e9a8" fill-opacity="0.8"/><rect x="439.06" y="14.6" width="0.8" height="4.2" fill="#f6e9a8" fill-opacity="0.6"/><path d="M442.25 13.70 L445.25 16.70 L442.25 19.70 Z" fill="#f6e9a8"/><rect x="445.75" y="16.4" width="2.5" height="0.7" fill="#f6e9a8" fill-opacity="0.8"/><rect x="446.65" y="14.6" width="0.8" height="4.2" fill="#f6e9a8" fill-opacity="0.6"/><path d="M449.85 13.70 L452.85 16.70 L449.85 19.70 Z" fill="#f6e9a8"/><rect x="453.35" y="16.4" width="2.5" height="0.7" fill="#f6e9a8" fill-opacity="0.8"/><rect x="454.25" y="14.6" width="0.8" height="4.2" fill="#f6e9a8" fill-opacity="0.6"/><path d="M457.45 13.70 L460.45 16.70 L457.45 19.70 Z" fill="#f6e9a8"/><rect x="460.95" y="16.4" width="2.5" height="0.7" fill="#f6e9a8" fill-opacity="0.8"/><rect x="461.85" y="14.6" width="0.8" height="4.2" fill="#f6e9a8" fill-opacity="0.6"/><path d="M465.05 13.70 L468.05 16.70 L465.05 19.70 Z" fill="#f6e9a8"/><rect x="468.55" y="16.4" width="2.5" height="0.7" fill="#f6e9a8" fill-opacity="0.8"/><rect x="469.45" y="14.6" width="0.8" height="4.2" fill="#f6e9a8" fill-opacity="0.6"/><path d="M472.64 13.70 L475.64 16.70 L472.64 19.70 Z" fill="#f6e9a8"/><rect x="476.14" y="16.4" width="2.5" height="0.7" fill="#f6e9a8" fill-opacity="0.8"/><rect x="477.04" y="14.6" width="0.8" height="4.2" fill="#f6e9a8" fill-opacity="0.6"/><path d="M480.24 13.70 L483.24 16.70 L480.24 19.70 Z" fill="#f6e9a8"/><rect x="483.74" y="16.4" width="2.5" height="0.7" fill="#f6e9a8" fill-opacity="0.8"/><rect x="484.64" y="14.6" width="0.8" height="4.2" fill="#f6e9a8" fill-opacity="0.6"/><path d="M487.84 13.70 L490.84 16.70 L487.84 19.70 Z" fill="#f6e9a8"/><rect x="491.34" y="16.4" width="2.5" height="0.7" fill="#f6e9a8" fill-opacity="0.8"/><rect x="492.24" y="14.6" width="0.8" height="4.2" fill="#f6e9a8" fill-opacity="0.6"/><path d="M495.44 13.70 L498.44 16.70 L495.44 19.70 Z" fill="#f6e9a8"/><rect x="498.94" y="16.4" width="2.5" height="0.7" fill="#f6e9a8" fill-opacity="0.8"/><rect x="499.84" y="14.6" width="0.8" height="4.2" fill="#f6e9a8" fill-opacity="0.6"/></svg>
<div class="a" style="left:510.3px;top:308px;width:0.9px;height:21.5px;background:#5a4c18;"></div>
<div class="t" style="left:271.5px;top:311.64px;font-size:5.5px;color:#6e6440;-webkit-text-stroke:0.2px #6e6440;">Drummer</div>
<div class="t" style="left:515px;top:311.64px;font-size:5.5px;color:#6e6440;-webkit-text-stroke:0.2px #6e6440;">Drummer</div>
<div class="a" style="left:386.2px;top:307.5px;width:5px;height:13px;background:#f6f1d6;border-radius:2.5px;box-shadow:0 0 0 0.8px #9a988a"></div>
<div class="a" style="left:388.4px;top:320px;width:0.8px;height:10px;background:#9a9a9c;"></div>
<div class="t" style="left:288px;top:377.17px;font-size:5.7px;color:#8e8e90;transform:scaleX(0.96);transform-origin:0 0;-webkit-text-stroke:0.2px #8e8e90;">Acoustic Drummer</div>
<div class="t" style="left:294.75px;top:385.25px;font-size:6.2px;color:#e4b613;font-weight:bold;transform:scaleX(0.95);transform-origin:0 0;-webkit-text-stroke:0.2px #e4b613;">Indie Disco</div>
<svg class="a" style="left:283.5px;top:397.5px" width="54" height="54" viewBox="0 0 54 54"><defs><radialGradient id="dg" cx="50%" cy="45%" r="52%"><stop offset="0" stop-color="#34312a"/><stop offset="0.8" stop-color="#2d2b24"/><stop offset="1" stop-color="#252420"/></radialGradient></defs>
<circle cx="27" cy="27" r="27" fill="url(#dg)"/>
<path d="M13 48 V44 Q14 34 26.5 33.5 Q39 34 40 44 V48 Z" fill="#27251e"/>
<g stroke="#d2aa1e" stroke-width="1.2" fill="none" stroke-linecap="round">
<path d="M3.5 13 Q13 9.5 23.5 13.5 Q13 15.5 3.5 13 Z" fill="#b8961c"/>
<path d="M13 10 V13"/>
<path d="M5.8 16 V41"/><path d="M1.5 27 L9 18"/>
<rect x="10.5" y="18.5" width="15.5" height="10.5"/><rect x="28" y="18.5" width="11.5" height="10.5"/>
<path d="M12 21 H24 M12 26 H24 M29.5 21 H38 M29.5 26 H38" stroke-width="0.5" stroke="#a08820"/>
<path d="M26.5 29 V34"/>
<path d="M13 48 V44 Q14 34 26.5 33.5 Q39 34 40 44 V48"/>
<path d="M42 22.5 Q47.5 20 53 22.5 Q47.5 25 42 22.5 Z" fill="#b8961c"/><path d="M47.5 17 V46"/>
<path d="M38 31 H46 M8 34 H12" stroke-width="0.6" stroke="#8a7420"/>
</g></svg>
<div class="a" style="left:300px;top:467px;width:21.6px;height:15px;background:#3a3a3c;border-radius:3px;"></div>
<svg class="a" style="left:305.5px;top:469.5px" width="11" height="10" viewBox="0 0 11 10"><path d="M8 5 A3 3 0 1 1 5.5 2" stroke="#e8e8e8" stroke-width="1.1" fill="none"/><path d="M4.5 0.6 L6.6 2 L4.8 3.6" stroke="#e8e8e8" stroke-width="1" fill="none"/></svg>
<div class="t" style="left:350.2px;top:377.29px;font-size:5.8px;color:#8e8e90;transform:scaleX(0.98);transform-origin:0 0;-webkit-text-stroke:0.2px #8e8e90;">Complexity</div>
<div class="t" style="left:393.5px;top:377.29px;font-size:5.8px;color:#8e8e90;transform:scaleX(0.97);transform-origin:0 0;-webkit-text-stroke:0.2px #8e8e90;">Intensity</div>
<div class="a" style="left:363.5px;top:389px;width:1.4px;height:89px;background:#2e2e30;border-radius:1px;"></div>
<div class="a" style="left:363.3px;top:430px;width:1.8px;height:48px;background:#d8b41e;border-radius:1px;"></div>
<svg class="a" style="left:358.2px;top:427px" width="12" height="6" viewBox="0 0 12 6"><ellipse cx="6" cy="3" rx="5" ry="2.4" fill="#34342c" fill-opacity="0.9" stroke="#75735e" stroke-width="0.9"/></svg>
<div class="a" style="left:403.3px;top:389px;width:1.4px;height:89px;background:#2e2e30;border-radius:1px;"></div>
<div class="a" style="left:403.1px;top:407px;width:1.8px;height:71px;background:#d8b41e;border-radius:1px;"></div>
<svg class="a" style="left:398px;top:404px" width="12" height="6" viewBox="0 0 12 6"><ellipse cx="6" cy="3" rx="5" ry="2.4" fill="#34342c" fill-opacity="0.9" stroke="#75735e" stroke-width="0.9"/></svg>
<div class="a" style="left:430.5px;top:362px;width:328.5px;height:130.5px;background:#212123;border-radius:6px;"></div>
<svg class="a" style="left:442.5px;top:388px" width="14" height="10" viewBox="0 0 14 10"><ellipse cx="7" cy="6.2" rx="6.5" ry="2.4" fill="#e8bc12"/><path d="M7 1 V4" stroke="#e8bc12" stroke-width="1.2"/><ellipse cx="7" cy="4.5" rx="3" ry="1" fill="#e8bc12"/></svg>
<svg class="a" style="left:465px;top:389.5px" width="14" height="7" viewBox="0 0 14 7"><ellipse cx="7" cy="3.5" rx="6.5" ry="1.8" fill="#6a6a6c" transform="rotate(-12 7 3.5)"/></svg>
<svg class="a" style="left:490.8px;top:388px" width="9" height="12" viewBox="0 0 9 12"><rect x="0.8" y="0.6" width="7.4" height="10.8" rx="1" fill="#6a6a6c"/><path d="M2.5 3 H6.5 M2.5 5.5 H6.5" stroke="#3a3a3c" stroke-width="0.8"/></svg>
<svg class="a" style="left:515.7px;top:390px" width="9" height="9" viewBox="0 0 9 9"><circle cx="4.5" cy="4.5" r="4" fill="#313133"/></svg>
<div class="t" style="left:518.59px;top:391.69px;font-size:5.8px;color:#d8b020;font-weight:bold;-webkit-text-stroke:0.2px #d8b020;">2</div>
<svg class="a" style="left:530.75px;top:391.25px" width="6" height="6" viewBox="0 0 6 6"><circle cx="3" cy="3" r="2.0" fill="#73601e"/></svg>
<svg class="a" style="left:542px;top:391.25px" width="6" height="6" viewBox="0 0 6 6"><circle cx="3" cy="3" r="1.9" fill="#f2cc18"/></svg>
<svg class="a" style="left:557.5px;top:391.25px" width="6" height="6" viewBox="0 0 6 6"><circle cx="3" cy="3" r="2.0" fill="#73601e"/></svg>
<svg class="a" style="left:569px;top:391.25px" width="6" height="6" viewBox="0 0 6 6"><circle cx="3" cy="3" r="1.9" fill="#f2cc18"/></svg>
<svg class="a" style="left:584.5px;top:391.25px" width="6" height="6" viewBox="0 0 6 6"><circle cx="3" cy="3" r="2.0" fill="#73601e"/></svg>
<svg class="a" style="left:596.25px;top:391.25px" width="6" height="6" viewBox="0 0 6 6"><circle cx="3" cy="3" r="1.9" fill="#f2cc18"/></svg>
<svg class="a" style="left:611.5px;top:391.25px" width="6" height="6" viewBox="0 0 6 6"><circle cx="3" cy="3" r="2.0" fill="#73601e"/></svg>
<svg class="a" style="left:623.25px;top:391.25px" width="6" height="6" viewBox="0 0 6 6"><circle cx="3" cy="3" r="1.9" fill="#f2cc18"/></svg>
<svg class="a" style="left:454.5px;top:453px" width="13" height="15" viewBox="0 0 13 15"><path d="M4.5 8.5 L2.2 14 M8.5 8.5 L10.8 14" stroke="#e8bc12" stroke-width="1.2"/><circle cx="6.5" cy="6.5" r="5.4" fill="#e8bc12"/><circle cx="6.5" cy="6.5" r="3.3" fill="none" stroke="#7a6210" stroke-width="0.7"/><path d="M6.5 6.5 L5 11.5 H8 Z" fill="#7a6210"/></svg>
<svg class="a" style="left:477.5px;top:454.5px" width="13" height="12" viewBox="0 0 13 12"><path d="M0.8 2.2 V9 Q0.8 11 6.5 11 Q12.2 11 12.2 9 V2.2 Z" fill="#e8bc12"/><ellipse cx="6.5" cy="2.2" rx="5.7" ry="1.7" fill="#f0c820"/><path d="M1 4.2 H12 M1 8.6 H12" stroke="#8a6e10" stroke-width="0.5"/><path d="M3.6 4.8 V8 M6.5 4.8 V8 M9.4 4.8 V8" stroke="#8a6e10" stroke-width="0.9"/></svg>
<svg class="a" style="left:515.7px;top:456.2px" width="9" height="9" viewBox="0 0 9 9"><circle cx="4.5" cy="4.5" r="4" fill="#313133"/></svg>
<div class="t" style="left:518.59px;top:457.69px;font-size:5.8px;color:#d8b020;font-weight:bold;-webkit-text-stroke:0.2px #d8b020;">1</div>
<svg class="a" style="left:530.25px;top:460.75px" width="6" height="6" viewBox="0 0 6 6"><circle cx="3" cy="3" r="1.9" fill="#f2cc18"/></svg>
<svg class="a" style="left:557.5px;top:454px" width="6" height="6" viewBox="0 0 6 6"><circle cx="3" cy="3" r="1.9" fill="#f2cc18"/></svg>
<svg class="a" style="left:557.5px;top:460.75px" width="6" height="6" viewBox="0 0 6 6"><circle cx="3" cy="3" r="1.9" fill="#f2cc18"/></svg>
<svg class="a" style="left:590.75px;top:454px" width="6" height="6" viewBox="0 0 6 6"><circle cx="3" cy="3" r="2.0" fill="#73601e"/></svg>
<svg class="a" style="left:584.5px;top:460.75px" width="6" height="6" viewBox="0 0 6 6"><circle cx="3" cy="3" r="1.9" fill="#f2cc18"/></svg>
<svg class="a" style="left:612px;top:454px" width="6" height="6" viewBox="0 0 6 6"><circle cx="3" cy="3" r="1.9" fill="#f2cc18"/></svg>
<svg class="a" style="left:612px;top:460.75px" width="6" height="6" viewBox="0 0 6 6"><circle cx="3" cy="3" r="1.9" fill="#f2cc18"/></svg>
<svg class="a" style="left:629px;top:454px" width="6" height="6" viewBox="0 0 6 6"><circle cx="3" cy="3" r="2.0" fill="#73601e"/></svg>
<svg class="a" style="left:530px;top:455px" width="106" height="11" viewBox="0 0 106 11"><rect x="1" y="1.70" width="2" height="0.6" fill="#3a3a3c"/><rect x="5" y="1.70" width="2" height="0.6" fill="#3a3a3c"/><rect x="9" y="1.70" width="2" height="0.6" fill="#3a3a3c"/><rect x="13" y="1.70" width="2" height="0.6" fill="#3a3a3c"/><rect x="17" y="1.70" width="2" height="0.6" fill="#3a3a3c"/><rect x="21" y="1.70" width="2" height="0.6" fill="#3a3a3c"/><rect x="25" y="1.70" width="2" height="0.6" fill="#3a3a3c"/><rect x="29" y="1.70" width="2" height="0.6" fill="#3a3a3c"/><rect x="33" y="1.70" width="2" height="0.6" fill="#3a3a3c"/><rect x="37" y="1.70" width="2" height="0.6" fill="#3a3a3c"/><rect x="41" y="1.70" width="2" height="0.6" fill="#3a3a3c"/><rect x="45" y="1.70" width="2" height="0.6" fill="#3a3a3c"/><rect x="49" y="1.70" width="2" height="0.6" fill="#3a3a3c"/><rect x="53" y="1.70" width="2" height="0.6" fill="#3a3a3c"/><rect x="57" y="1.70" width="2" height="0.6" fill="#3a3a3c"/><rect x="61" y="1.70" width="2" height="0.6" fill="#3a3a3c"/><rect x="65" y="1.70" width="2" height="0.6" fill="#3a3a3c"/><rect x="69" y="1.70" width="2" height="0.6" fill="#3a3a3c"/><rect x="73" y="1.70" width="2" height="0.6" fill="#3a3a3c"/><rect x="77" y="1.70" width="2" height="0.6" fill="#3a3a3c"/><rect x="81" y="1.70" width="2" height="0.6" fill="#3a3a3c"/><rect x="85" y="1.70" width="2" height="0.6" fill="#3a3a3c"/><rect x="89" y="1.70" width="2" height="0.6" fill="#3a3a3c"/><rect x="93" y="1.70" width="2" height="0.6" fill="#3a3a3c"/><rect x="97" y="1.70" width="2" height="0.6" fill="#3a3a3c"/><rect x="101" y="1.70" width="2" height="0.6" fill="#3a3a3c"/><rect x="105" y="1.70" width="2" height="0.6" fill="#3a3a3c"/><rect x="1" y="8.45" width="2" height="0.6" fill="#3a3a3c"/><rect x="5" y="8.45" width="2" height="0.6" fill="#3a3a3c"/><rect x="9" y="8.45" width="2" height="0.6" fill="#3a3a3c"/><rect x="13" y="8.45" width="2" height="0.6" fill="#3a3a3c"/><rect x="17" y="8.45" width="2" height="0.6" fill="#3a3a3c"/><rect x="21" y="8.45" width="2" height="0.6" fill="#3a3a3c"/><rect x="25" y="8.45" width="2" height="0.6" fill="#3a3a3c"/><rect x="29" y="8.45" width="2" height="0.6" fill="#3a3a3c"/><rect x="33" y="8.45" width="2" height="0.6" fill="#3a3a3c"/><rect x="37" y="8.45" width="2" height="0.6" fill="#3a3a3c"/><rect x="41" y="8.45" width="2" height="0.6" fill="#3a3a3c"/><rect x="45" y="8.45" width="2" height="0.6" fill="#3a3a3c"/><rect x="49" y="8.45" width="2" height="0.6" fill="#3a3a3c"/><rect x="53" y="8.45" width="2" height="0.6" fill="#3a3a3c"/><rect x="57" y="8.45" width="2" height="0.6" fill="#3a3a3c"/><rect x="61" y="8.45" width="2" height="0.6" fill="#3a3a3c"/><rect x="65" y="8.45" width="2" height="0.6" fill="#3a3a3c"/><rect x="69" y="8.45" width="2" height="0.6" fill="#3a3a3c"/><rect x="73" y="8.45" width="2" height="0.6" fill="#3a3a3c"/><rect x="77" y="8.45" width="2" height="0.6" fill="#3a3a3c"/><rect x="81" y="8.45" width="2" height="0.6" fill="#3a3a3c"/><rect x="85" y="8.45" width="2" height="0.6" fill="#3a3a3c"/><rect x="89" y="8.45" width="2" height="0.6" fill="#3a3a3c"/><rect x="93" y="8.45" width="2" height="0.6" fill="#3a3a3c"/><rect x="97" y="8.45" width="2" height="0.6" fill="#3a3a3c"/><rect x="101" y="8.45" width="2" height="0.6" fill="#3a3a3c"/><rect x="105" y="8.45" width="2" height="0.6" fill="#3a3a3c"/></svg>
<svg class="a" style="left:530.25px;top:460.75px" width="6" height="6" viewBox="0 0 6 6"><circle cx="3" cy="3" r="1.9" fill="#f2cc18"/></svg>
<svg class="a" style="left:557.5px;top:454px" width="6" height="6" viewBox="0 0 6 6"><circle cx="3" cy="3" r="1.9" fill="#f2cc18"/></svg>
<svg class="a" style="left:557.5px;top:460.75px" width="6" height="6" viewBox="0 0 6 6"><circle cx="3" cy="3" r="1.9" fill="#f2cc18"/></svg>
<svg class="a" style="left:590.75px;top:454px" width="6" height="6" viewBox="0 0 6 6"><circle cx="3" cy="3" r="2.0" fill="#73601e"/></svg>
<svg class="a" style="left:584.5px;top:460.75px" width="6" height="6" viewBox="0 0 6 6"><circle cx="3" cy="3" r="1.9" fill="#f2cc18"/></svg>
<svg class="a" style="left:612px;top:454px" width="6" height="6" viewBox="0 0 6 6"><circle cx="3" cy="3" r="1.9" fill="#f2cc18"/></svg>
<svg class="a" style="left:612px;top:460.75px" width="6" height="6" viewBox="0 0 6 6"><circle cx="3" cy="3" r="1.9" fill="#f2cc18"/></svg>
<svg class="a" style="left:629px;top:454px" width="6" height="6" viewBox="0 0 6 6"><circle cx="3" cy="3" r="2.0" fill="#73601e"/></svg>
<div class="t" style="left:532px;top:469.54px;font-size:5.5px;color:#a0a0a2;transform:scaleX(0.97);transform-origin:0 0;-webkit-text-stroke:0.2px #a0a0a2;">Add:</div>
<div class="t" style="left:546px;top:469.54px;font-size:5.5px;color:#e4b613;transform:scaleX(0.93);transform-origin:0 0;-webkit-text-stroke:0.2px #e4b613;">Chords</div>
<div class="t" style="left:661.9px;top:376.86px;font-size:5.6px;color:#9a9a9c;transform:scaleX(0.97);transform-origin:0 0;-webkit-text-stroke:0.2px #9a9a9c;">Fill Amount</div>
<svg class="a" style="left:660.6px;top:385.5px" width="30" height="30" viewBox="0 0 30 30"><circle cx="15" cy="15" r="13.3" fill="none" stroke="#151517" stroke-width="2"/><circle cx="15" cy="15" r="11.5" fill="#3e3e40"/><path d="M8.35 26.52 A13.3 13.3 0 0 1 4.11 7.37" stroke="#f0c418" stroke-width="1.8" fill="none"/><path d="M11.05 13.56 L6.54 11.92" stroke="#c8a020" stroke-width="1"/></svg>
<div class="t" style="left:656.9px;top:439.66px;font-size:5.6px;color:#9a9a9c;transform:scaleX(1.02);transform-origin:0 0;-webkit-text-stroke:0.2px #9a9a9c;">Fill Complexity</div>
<svg class="a" style="left:660.6px;top:448.6px" width="30" height="30" viewBox="0 0 30 30"><circle cx="15" cy="15" r="13.3" fill="none" stroke="#151517" stroke-width="2"/><circle cx="15" cy="15" r="11.5" fill="#3e3e40"/><path d="M7.37 25.89 A13.3 13.3 0 0 1 16.16 1.75" stroke="#f0c418" stroke-width="1.8" fill="none"/><path d="M14.63 10.82 L14.22 6.03" stroke="#c8a020" stroke-width="1"/></svg>
<div class="t" style="left:720.25px;top:398.86px;font-size:5.6px;color:#9a9a9c;transform:scaleX(0.95);transform-origin:0 0;-webkit-text-stroke:0.2px #9a9a9c;">Swing</div>
<svg class="a" style="left:713.5px;top:408.8px" width="28" height="28" viewBox="0 0 28 28"><circle cx="14" cy="14" r="12.3" fill="none" stroke="#151517" stroke-width="2"/><circle cx="14" cy="14" r="10.5" fill="#3e3e40"/><path d="M6.95 24.08 A12.3 12.3 0 0 1 2.85 19.20" stroke="#f0c418" stroke-width="1.8" fill="none"/><path d="M10.67 15.92 L6.86 18.12" stroke="#c8a020" stroke-width="1"/></svg>
<div class="a" style="left:715.7px;top:445.7px;width:23.3px;height:14.5px;background:#3a3a3c;border-radius:3px;"></div>
<div class="t" style="left:721.65px;top:450.26px;font-size:5.6px;color:#e6e6e6;transform:scaleX(1.06);transform-origin:0 0;-webkit-text-stroke:0.2px #e6e6e6;">16th</div>
<div class="a" style="left:118.5px;top:531.4px;width:20.5px;height:15px;background:#c6c6c8;border-radius:3px;"></div>
<svg class="a" style="left:122.5px;top:533.5px" width="13" height="11" viewBox="0 0 13 11"><rect x="1" y="1.5" width="7" height="5.5" rx="1" fill="#2a2a2c"/><rect x="3.5" y="3.5" width="7.5" height="6" rx="1" fill="#2a2a2c" stroke="#c6c6c8" stroke-width="0.8"/><path d="M6 7.5 H9" stroke="#c6c6c8" stroke-width="0.8"/></svg>
<svg class="a" style="left:145px;top:533.5px" width="11" height="10" viewBox="0 0 11 10"><rect x="1" y="1" width="9" height="3.6" rx="1.8" fill="#e6e6e6"/><rect x="1" y="5.6" width="9" height="3.6" rx="1.8" fill="#e6e6e6"/><circle cx="3" cy="2.8" r="1.1" fill="#232325"/><circle cx="8" cy="7.4" r="1.1" fill="#232325"/></svg>
<svg class="a" style="left:168px;top:533px" width="9" height="11" viewBox="0 0 9 11"><rect x="1" y="0.8" width="7" height="9.4" rx="1" stroke="#e6e6e6" stroke-width="0.9" fill="none"/><path d="M4.5 2.5 V8.5 M3.2 4 L4.5 2.5 L5.8 4 M3.2 7 L4.5 8.5 L5.8 7" stroke="#e6e6e6" stroke-width="0.7" fill="none"/></svg>
<div class="a" style="left:407.9px;top:531.2px;width:21.2px;height:15.4px;background:#c4c4c6;border-radius:3px;"></div>
<svg class="a" style="left:413px;top:534px" width="11" height="10" viewBox="0 0 11 10"><path d="M2.5 8 L8.5 2" stroke="#1c1c1e" stroke-width="1.3" stroke-linecap="round"/></svg>
<svg class="a" style="left:434.5px;top:532.5px" width="11" height="11" viewBox="0 0 11 11"><circle cx="5.5" cy="5.8" r="2.6" stroke="#e6e6e6" stroke-width="1" fill="none"/><path d="M5.5 0.8 V2.2 M1 5.8 H2.2 M8.8 5.8 H10 M2.3 2.6 L3.2 3.5 M8.7 2.6 L7.8 3.5 M1.5 9.5 H9.5" stroke="#e6e6e6" stroke-width="0.9"/></svg>
<svg class="a" style="left:456.5px;top:533px" width="10" height="10" viewBox="0 0 10 10"><path d="M2 1 V9 M5 1 V9 M8 1 V9" stroke="#e6e6e6" stroke-width="0.9"/><rect x="0.8" y="5" width="2.4" height="1.6" fill="#e6e6e6"/><rect x="3.8" y="3" width="2.4" height="1.6" fill="#e6e6e6"/><rect x="6.8" y="6" width="2.4" height="1.6" fill="#e6e6e6"/></svg>
<svg class="a" style="left:746px;top:535px" width="11" height="7" viewBox="0 0 11 7"><rect x="0.5" y="0.5" width="10" height="6" fill="#f0f0f0"/><path d="M2.5 0.5 V4 M5.5 0.5 V4 M8.5 0.5 V4" stroke="#232325" stroke-width="1"/></svg>
</div></div>
</body></html>
